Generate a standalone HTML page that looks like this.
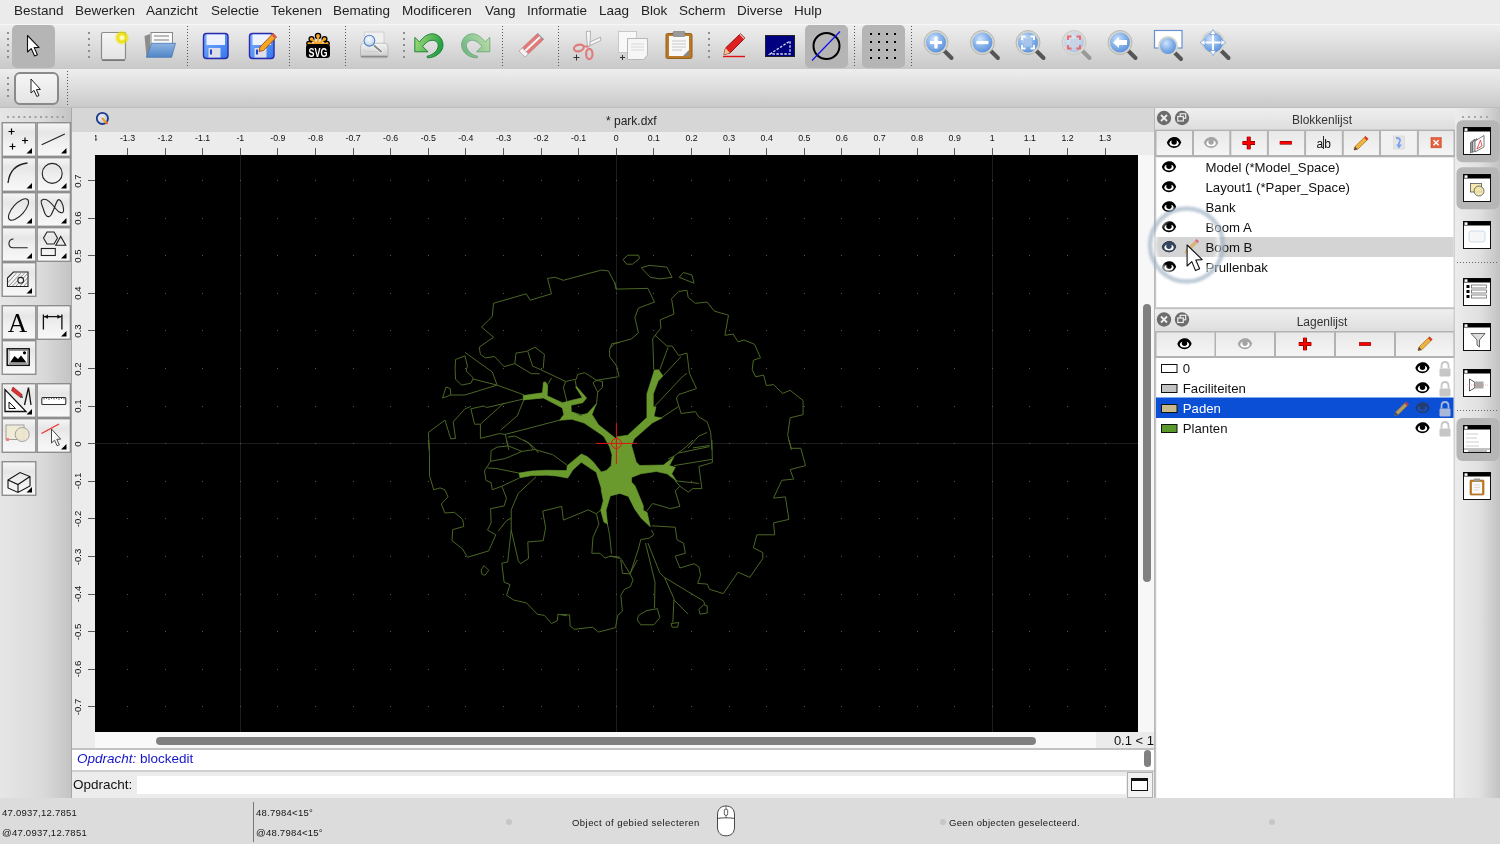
<!DOCTYPE html>
<html><head><meta charset="utf-8">
<style>
*{box-sizing:border-box}
html,body{margin:0;padding:0}
body{width:1500px;height:844px;position:relative;overflow:hidden;background:#e4e4e4;font-family:"Liberation Sans",sans-serif;color:#1e1e1e}
.a{position:absolute}
.menu span{position:absolute;top:3px;font-size:13.5px;color:#222}
.tb{background:linear-gradient(#eeeeee,#e2e2e2 35%,#c9c9c9)}
.sep{position:absolute;width:0;border-left:1.5px dotted #6a6a6a}
.chk{position:absolute;background:#b4b4b4;border-radius:6px}
.tbtn{position:absolute;border:1.5px solid #8c8c8c;background:linear-gradient(#fbfbfb,#ececec 50%,#e2e2e2);}
.tri{position:absolute;right:2px;bottom:2px;width:0;height:0;border-left:7px solid transparent;border-bottom:7px solid #000}
.rl{position:absolute;font-size:9.5px;color:#222}
.blist div{position:absolute;left:0;width:298px;height:20px;font-size:13.4px;line-height:20px}
.pbtn{position:absolute;top:0;height:26px;border-right:2px solid #c6c6c6;background:linear-gradient(#f7f7f7,#e9e9e9)}
.st{position:absolute;font-size:9.5px;color:#151515;letter-spacing:0.25px}
#wrap{position:absolute;left:0;top:0;width:1500px;height:844px;will-change:transform}
</style></head><body><div id="wrap">

<!-- menu bar -->
<div class="a menu" style="left:0;top:0;width:1500px;height:24px;background:#ebebeb">
<span style="left:14px">Bestand</span>
<span style="left:75px">Bewerken</span>
<span style="left:146px">Aanzicht</span>
<span style="left:211px">Selectie</span>
<span style="left:271px">Tekenen</span>
<span style="left:333px">Bemating</span>
<span style="left:402px">Modificeren</span>
<span style="left:485px">Vang</span>
<span style="left:527px">Informatie</span>
<span style="left:599px">Laag</span>
<span style="left:641px">Blok</span>
<span style="left:679px">Scherm</span>
<span style="left:737px">Diverse</span>
<span style="left:794px">Hulp</span>
</div>

<!-- main toolbar -->
<div class="a tb" style="left:0;top:24px;width:1500px;height:44px;border-top:1px solid #f6f6f6"></div>
<div class="a tb" style="left:0;top:68px;width:1500px;height:40px;border-top:1px solid #c8c8c8;border-bottom:1px solid #bdbdbd"></div>

<svg class="a" style="left:0;top:24px" width="1500" height="84" viewBox="0 24 1500 84">
<defs>
<linearGradient id="gpage" x1="0" y1="0" x2="0" y2="1"><stop offset="0" stop-color="#f6f6f6"/><stop offset="1" stop-color="#e4e4e4"/></linearGradient>
<radialGradient id="gglow"><stop offset="0" stop-color="#ffffff"/><stop offset="0.25" stop-color="#fbf7a0"/><stop offset="0.5" stop-color="#eee000"/><stop offset="0.75" stop-color="#eee000" stop-opacity="0.6"/><stop offset="1" stop-color="#eee000" stop-opacity="0"/></radialGradient>
<linearGradient id="gfold" x1="0" y1="0" x2="0" y2="1"><stop offset="0" stop-color="#8fb4e2"/><stop offset="1" stop-color="#4f86c8"/></linearGradient>
<linearGradient id="gflop" x1="0" y1="0" x2="1" y2="1"><stop offset="0" stop-color="#7fb0ff"/><stop offset="1" stop-color="#3377ee"/></linearGradient>
<radialGradient id="gmag" cx="0.4" cy="0.35" r="0.7"><stop offset="0" stop-color="#cfe3fb"/><stop offset="0.5" stop-color="#86b2ea"/><stop offset="1" stop-color="#4f87d6"/></radialGradient>
<radialGradient id="gmagd" cx="0.4" cy="0.35" r="0.7"><stop offset="0" stop-color="#e4ecf6"/><stop offset="1" stop-color="#a9bfdc"/></radialGradient>
<linearGradient id="gprn" x1="0" y1="0" x2="0" y2="1"><stop offset="0" stop-color="#f4f4f4"/><stop offset="1" stop-color="#c8c8c8"/></linearGradient>
<radialGradient id="gmagl" cx="0.45" cy="0.35" r="0.7"><stop offset="0" stop-color="#f4f8fd"/><stop offset="0.6" stop-color="#d6e2f2"/><stop offset="1" stop-color="#a8bcd8"/></radialGradient>
</defs>
<!-- handles -->
<g fill="#8e8e8e">
<rect x="7" y="32" width="2" height="2"/><rect x="7" y="38" width="2" height="2"/><rect x="7" y="44" width="2" height="2"/><rect x="7" y="50" width="2" height="2"/><rect x="7" y="56" width="2" height="2"/>
<rect x="88" y="32" width="2" height="2"/><rect x="88" y="38" width="2" height="2"/><rect x="88" y="44" width="2" height="2"/><rect x="88" y="50" width="2" height="2"/><rect x="88" y="56" width="2" height="2"/>
<rect x="403" y="32" width="2" height="2"/><rect x="403" y="38" width="2" height="2"/><rect x="403" y="44" width="2" height="2"/><rect x="403" y="50" width="2" height="2"/><rect x="403" y="56" width="2" height="2"/>
<rect x="708" y="32" width="2" height="2"/><rect x="708" y="38" width="2" height="2"/><rect x="708" y="44" width="2" height="2"/><rect x="708" y="50" width="2" height="2"/><rect x="708" y="56" width="2" height="2"/>
<rect x="7" y="77" width="2" height="2"/><rect x="7" y="83" width="2" height="2"/><rect x="7" y="89" width="2" height="2"/><rect x="7" y="95" width="2" height="2"/>
</g>
<!-- separators -->
<g stroke="#555" stroke-width="1" stroke-dasharray="1 2">
<line x1="187.5" y1="26" x2="187.5" y2="66"/>
<line x1="289.5" y1="26" x2="289.5" y2="66"/>
<line x1="345.5" y1="26" x2="345.5" y2="66"/>
<line x1="502.5" y1="26" x2="502.5" y2="66"/>
<line x1="558.5" y1="26" x2="558.5" y2="66"/>
<line x1="854.5" y1="26" x2="854.5" y2="66"/>
<line x1="911.5" y1="26" x2="911.5" y2="66"/>
<line x1="67.5" y1="71" x2="67.5" y2="105"/>
</g>
<!-- checked pointer -->
<rect x="12" y="25" width="43" height="43" rx="5" fill="#b5b5b5"/>
<path d="M27.5 35.5 L27.5 52 L31.2 48.6 L34.6 56 L37.4 54.8 L34.2 47.6 L39 47.4 Z" fill="#fff" stroke="#111" stroke-width="1.1" stroke-linejoin="round"/>
<!-- second toolbar pointer button -->
<rect x="15" y="73" width="43" height="31" rx="5" fill="url(#gpage)" stroke="#8a8a8a" stroke-width="2"/>
<path d="M31 79 L31 93 L34 90.4 L36.8 96.5 L39 95.5 L36.4 89.6 L40.4 89.4 Z" fill="#fff" stroke="#222" stroke-width="1" stroke-linejoin="round"/>
<!-- new -->
<rect x="101.5" y="32.5" width="24" height="27" rx="1.5" fill="url(#gpage)" stroke="#8c8c8c" stroke-width="1.2"/>
<line x1="102" y1="60.5" x2="125" y2="60.5" stroke="#777" stroke-width="1"/>
<circle cx="121.9" cy="37.7" r="7.5" fill="url(#gglow)"/>
<!-- open -->
<path d="M144.5 36 L150 34 L150 55 L146.5 57 Z" fill="#8c8c8c"/>
<rect x="151" y="32.5" width="21.5" height="16" fill="#fafafa" stroke="#888" stroke-width="1"/>
<rect x="154" y="35" width="15" height="2" fill="#bbb"/><rect x="154" y="39" width="15" height="2" fill="#bbb"/>
<path d="M151.5 43.3 L175.5 43.3 L171.6 57.3 L146.4 57.3 Z" fill="url(#gfold)" stroke="#4a78b0" stroke-width="0.8"/>
<!-- save -->
<rect x="203.5" y="33.5" width="24.5" height="25" rx="3" fill="url(#gflop)" stroke="#2a2aa8" stroke-width="1.4"/>
<rect x="206.5" y="34.5" width="18.5" height="10.5" fill="#eef2ff"/>
<rect x="208.5" y="48" width="12" height="9.5" fill="#dedee8"/>
<rect x="210" y="49.5" width="2" height="5" fill="#2244cc"/>
<!-- save as -->
<rect x="249.5" y="33.5" width="24.5" height="25" rx="3" fill="url(#gflop)" stroke="#2a2aa8" stroke-width="1.4"/>
<rect x="252.5" y="34.5" width="18.5" height="10.5" fill="#eef2ff"/>
<rect x="254.5" y="48" width="12" height="9.5" fill="#dedee8"/>
<rect x="256" y="49.5" width="2" height="5" fill="#2244cc"/>
<path d="M259 51.5 L260 47 L273 33.5 L276.5 37 L263.5 50.5 Z" fill="#f5a623" stroke="#a14a10" stroke-width="0.9"/>
<path d="M273 33.5 L276.5 37 L275 38.5 L271.5 35 Z" fill="#e05050"/>
<!-- svg -->
<g fill="#f6a623" stroke="#000" stroke-width="1.3">
<circle cx="318" cy="36" r="2.6"/><circle cx="311.5" cy="39" r="2.4"/><circle cx="324.5" cy="39" r="2.4"/><circle cx="309" cy="43.5" r="2.2"/><circle cx="327" cy="43.5" r="2.2"/>
</g>
<path d="M318 45 L311.5 39 M318 45 L318 36 M318 45 L324.5 39 M318 45 L309 43.5 M318 45 L327 43.5" stroke="#f6a623" stroke-width="2.2"/>
<rect x="306" y="44" width="24" height="14" rx="3.5" fill="#000"/>
<text x="318" y="56.6" font-family="Liberation Sans" font-weight="bold" font-size="13" fill="#fff" text-anchor="middle" textLength="19" lengthAdjust="spacingAndGlyphs">SVG</text>
<!-- print preview -->
<rect x="364.5" y="32" width="19.5" height="14" rx="1" fill="#f0f0f0" stroke="#c8c8c8" stroke-width="0.8"/>
<path d="M360.5 47 Q360.5 43.2 364 43.2 L384.5 43.2 Q388 43.2 388 47 L388 55.5 Q388 57.8 385.5 57.8 L363 57.8 Q360.5 57.8 360.5 55.5 Z" fill="url(#gprn)" stroke="#b0b0b0" stroke-width="0.8"/>
<path d="M361 56.5 L387.5 56.5" stroke="#8a8a8a" stroke-width="1.6"/>
<path d="M363 49 Q363 51.5 366 51.5 L383 51.5" fill="none" stroke="#c8c8c8" stroke-width="0.8"/>
<line x1="373.5" y1="45" x2="381" y2="51.5" stroke="#fff" stroke-width="3.6" stroke-linecap="round"/>
<line x1="373.5" y1="45" x2="381" y2="51.5" stroke="#8a8a8a" stroke-width="2.2" stroke-linecap="round"/>
<circle cx="369.4" cy="40.7" r="6.6" fill="#f6f6f6"/>
<circle cx="369.4" cy="40.7" r="5.4" fill="url(#gmagl)" stroke="#4a7fc6" stroke-width="1.1"/>
<!-- undo -->
<linearGradient id="gundo" x1="0" y1="0" x2="1" y2="0.3"><stop offset="0" stop-color="#a8de7a"/><stop offset="1" stop-color="#25a045"/></linearGradient>
<path id="undo" d="M414.8 37.4 L419.5 42 C423 37 428 33.8 432 33.8 C438.5 33.8 443 39 443 45 C443 52 436 57.8 427.5 57.8 L427 56.3 C433 55 438.2 50.5 438.2 45.5 C438.2 42.5 435.5 40.3 432 40.3 C429 40.3 426 42.5 422.6 46.4 L428 51.8 L414.8 51.8 Z" fill="url(#gundo)" stroke="#137a2c" stroke-width="0.9" stroke-linejoin="round"/>
<g transform="translate(904.6,0) scale(-1,1)" opacity="0.55"><path d="M414.8 37.4 L419.5 42 C423 37 428 33.8 432 33.8 C438.5 33.8 443 39 443 45 C443 52 436 57.8 427.5 57.8 L427 56.3 C433 55 438.2 50.5 438.2 45.5 C438.2 42.5 435.5 40.3 432 40.3 C429 40.3 426 42.5 422.6 46.4 L428 51.8 L414.8 51.8 Z" fill="url(#gundo)" stroke="#137a2c" stroke-width="0.9" stroke-linejoin="round"/></g>
<!-- eraser -->
<ellipse cx="532" cy="57.3" rx="12" ry="1.8" fill="#d2d2d2" opacity="0.8"/>
<path d="M519 51 L537.5 33.5 L543.5 39.5 L525 57 Z" fill="#e27a7a" stroke="#c86464" stroke-width="0.6"/>
<path d="M521.3 53.3 L539.8 35.8 L541.2 37.2 L522.7 54.7 Z" fill="#f4f4f4"/>
<path d="M519 51 L522.3 47.9 L528.3 53.9 L525 57 Z" fill="#f2f2f2" stroke="#a8a8a8" stroke-width="0.6"/>
<path d="M537.5 33.5 L543.5 39.5" stroke="#999" stroke-width="1.2"/>
<!-- scissors -->
<path d="M586.2 31.5 L590.5 31 L590 46 L587.5 47 Z" fill="#f6f6f6" stroke="#9a9a9a" stroke-width="0.7"/>
<path d="M590 42 L600.5 37.2 L600.8 40.5 L590 45.5 Z" fill="#f6f6f6" stroke="#9a9a9a" stroke-width="0.7"/>
<ellipse cx="578.8" cy="48" rx="5" ry="3.2" transform="rotate(-15 578.8 48)" fill="none" stroke="#e07c7c" stroke-width="2.2"/>
<ellipse cx="589.3" cy="54" rx="3.2" ry="5.2" fill="none" stroke="#e07c7c" stroke-width="2.2"/>
<path d="M583.5 46.5 L588.5 46.5" stroke="#e07c7c" stroke-width="2"/>
<path d="M573.5 57.5 L579.5 57.5 M576.5 54.5 L576.5 60.5" stroke="#333" stroke-width="1"/>
<!-- copy -->
<rect x="618.5" y="31.5" width="18" height="21" fill="#f8f8f8" stroke="#c8c8c8" stroke-width="1"/>
<path d="M627.5 38.5 L647.5 38.5 L647.5 55 L643.5 59.5 L627.5 59.5 Z" fill="#f6f6f6" stroke="#b8b8b8" stroke-width="1"/>
<g stroke="#d8d8d8" stroke-width="1"><line x1="631" y1="44" x2="644" y2="44"/><line x1="631" y1="47" x2="644" y2="47"/><line x1="631" y1="50" x2="644" y2="50"/></g>
<path d="M620 57.5 L625 57.5 M622.5 55 L622.5 60" stroke="#333" stroke-width="1"/>
<!-- paste -->
<rect x="666" y="33.5" width="26" height="25" rx="1.5" fill="#b87a28" stroke="#94601a" stroke-width="1"/>
<rect x="669" y="36" width="20" height="20" fill="#f8f8f8"/>
<rect x="673" y="31.5" width="12" height="5" rx="1" fill="#9a9a9a" stroke="#777" stroke-width="0.6"/>
<g stroke="#c8c8c8" stroke-width="1"><line x1="672" y1="41" x2="686" y2="41"/><line x1="672" y1="44" x2="686" y2="44"/><line x1="672" y1="47" x2="686" y2="47"/><line x1="672" y1="50" x2="682" y2="50"/></g>
<path d="M683 56 L689 50 L689 56 Z" fill="#888"/>
<!-- pencil line -->
<line x1="723" y1="56.5" x2="745" y2="56.5" stroke="#e01010" stroke-width="1.4"/>
<path d="M724 54.5 L725.5 48 L739 35 L743.5 39.5 L730 53 Z" fill="#e02020" stroke="#8a0c0c" stroke-width="0.9"/>
<path d="M724 54.5 L725.5 48 L730 53 Z" fill="#e8c890"/>
<path d="M739 35 L743.5 39.5 L745 38 L740.5 33.5 Z" fill="#f0a0a0" stroke="#8a0c0c" stroke-width="0.6"/>
<!-- blue rect -->
<rect x="765.5" y="35.5" width="29" height="21" fill="#000080" stroke="#222" stroke-width="1"/>
<path d="M770 54 L790 41 L790 54 Z" fill="none" stroke="#dde" stroke-width="1.3" stroke-dasharray="2.5 1.5"/>
<!-- checked circle -->
<rect x="805" y="25" width="43" height="43" rx="5" fill="#b5b5b5"/>
<circle cx="826.5" cy="46" r="13" fill="none" stroke="#000" stroke-width="2"/>
<line x1="812" y1="60.5" x2="840" y2="31.5" stroke="#1010ee" stroke-width="1.2"/>
<!-- grid -->
<rect x="862" y="25" width="43" height="43" rx="5" fill="#b5b5b5"/>
<g fill="#000">
<rect x="870" y="33" width="2" height="2"/><rect x="878" y="33" width="2" height="2"/><rect x="886" y="33" width="2" height="2"/><rect x="894" y="33" width="2" height="2"/>
<rect x="870" y="41" width="2" height="2"/><rect x="878" y="41" width="2" height="2"/><rect x="886" y="41" width="2" height="2"/><rect x="894" y="41" width="2" height="2"/>
<rect x="870" y="49" width="2" height="2"/><rect x="878" y="49" width="2" height="2"/><rect x="886" y="49" width="2" height="2"/><rect x="894" y="49" width="2" height="2"/>
<rect x="870" y="57" width="2" height="2"/><rect x="878" y="57" width="2" height="2"/><rect x="886" y="57" width="2" height="2"/><rect x="894" y="57" width="2" height="2"/>
</g>
<!-- zoom icons -->
<g id="zm">
<g transform="translate(936,42.5)"><line x1="8" y1="8" x2="15.5" y2="15.5" stroke="#555" stroke-width="4" stroke-linecap="round"/><circle r="11" fill="url(#gmag)" stroke="#d6d6d0" stroke-width="2"/><circle r="12" fill="none" stroke="#a8a8a0" stroke-width="0.7"/><path d="M-6 0 H6 M0 -6 V6" stroke="#fff" stroke-width="3.2"/></g>
<g transform="translate(982.4,42.5)"><line x1="8" y1="8" x2="15.5" y2="15.5" stroke="#555" stroke-width="4" stroke-linecap="round"/><circle r="11" fill="url(#gmag)" stroke="#d6d6d0" stroke-width="2"/><circle r="12" fill="none" stroke="#a8a8a0" stroke-width="0.7"/><path d="M-6 0 H6" stroke="#fff" stroke-width="3.2"/></g>
<g transform="translate(1028,42.5)"><line x1="8" y1="8" x2="15.5" y2="15.5" stroke="#555" stroke-width="4" stroke-linecap="round"/><circle r="11" fill="url(#gmag)" stroke="#d6d6d0" stroke-width="2"/><circle r="12" fill="none" stroke="#a8a8a0" stroke-width="0.7"/><rect x="-4" y="-4" width="8" height="8" fill="#a8c4ea"/><path d="M-6 -2.5 V-6 H-2.5 M2.5 -6 H6 V-2.5 M6 2.5 V6 H2.5 M-2.5 6 H-6 V2.5" fill="none" stroke="#fff" stroke-width="1.8"/></g>
<g transform="translate(1074,42.5)"><line x1="8" y1="8" x2="15.5" y2="15.5" stroke="#999" stroke-width="4" stroke-linecap="round"/><circle r="11" fill="url(#gmagd)" stroke="#dcdcd8" stroke-width="2"/><circle r="12" fill="none" stroke="#c0c0b8" stroke-width="0.7"/><rect x="-4" y="-4" width="8" height="8" fill="#c8d4e4"/><path d="M-6 -2.5 V-6 H-2.5 M2.5 -6 H6 V-2.5 M6 2.5 V6 H2.5 M-2.5 6 H-6 V2.5" fill="none" stroke="#ee6666" stroke-width="1.8"/></g>
<g transform="translate(1120,42.5)"><line x1="8" y1="8" x2="15.5" y2="15.5" stroke="#555" stroke-width="4" stroke-linecap="round"/><circle r="11" fill="url(#gmag)" stroke="#d6d6d0" stroke-width="2"/><circle r="12" fill="none" stroke="#a8a8a0" stroke-width="0.7"/><path d="M-7 0 L-1 -5.5 L-1 -2.5 L7 -2.5 L7 2.5 L-1 2.5 L-1 5.5 Z" fill="#fff"/></g>
<g transform="translate(1168,46)"><rect x="-13.5" y="-15.5" width="27.5" height="17.5" fill="#fff" stroke="#6a90d0" stroke-width="1.2"/><line x1="7" y1="7" x2="13" y2="13" stroke="#555" stroke-width="4" stroke-linecap="round"/><circle r="9" fill="url(#gmag)" stroke="#d6d6d0" stroke-width="2"/></g>
<g transform="translate(1213,42.5)"><line x1="8" y1="8" x2="15.5" y2="15.5" stroke="#555" stroke-width="4" stroke-linecap="round"/><circle r="11" fill="url(#gmag)" stroke="#d6d6d0" stroke-width="2"/><path d="M0 -12 V12 M-12 0 H12" stroke="#fff" stroke-width="2"/><path d="M0 -13 L-3 -8 H3 Z M0 13 L-3 8 H3 Z M-13 0 L-8 -3 V3 Z M13 0 L8 -3 V3 Z" fill="#fff" stroke="#5a86d0" stroke-width="0.6"/></g>
</g>
</svg>


<!-- left toolbox -->
<div class="a" style="left:0;top:108px;width:72px;height:690px;background:linear-gradient(90deg,#e6e6e6,#dadada 60%,#c4c4c4);border-right:1px solid #a8a8a8"></div>
<svg class="a" style="left:0;top:108px" width="72" height="400" viewBox="0 108 72 400">
<defs>
<linearGradient id="gbtn" x1="0" y1="0" x2="0" y2="1"><stop offset="0" stop-color="#f6f6f6"/><stop offset="0.3" stop-color="#e6e6e6"/><stop offset="0.55" stop-color="#efefef"/><stop offset="1" stop-color="#f8f8f8"/></linearGradient>
<symbol id="tri" overflow="visible"><path d="M0 5.5 L5.5 0 L5.5 5.5 Z" fill="#000"/></symbol>
</defs>
<!-- handle dots -->
<g fill="#a0a0a0">
<rect x="7" y="116" width="2" height="2"/><rect x="12.5" y="116" width="2" height="2"/><rect x="18" y="116" width="2" height="2"/><rect x="23.5" y="116" width="2" height="2"/><rect x="29" y="116" width="2" height="2"/><rect x="34.5" y="116" width="2" height="2"/><rect x="40" y="116" width="2" height="2"/><rect x="45.5" y="116" width="2" height="2"/><rect x="51" y="116" width="2" height="2"/><rect x="56.5" y="116" width="2" height="2"/><rect x="62" y="116" width="2" height="2"/>
</g>
<g fill="url(#gbtn)" stroke="#8e8e8e" stroke-width="1.4">
<rect x="2.2" y="122.7" width="33.6" height="33.6"/><rect x="37.2" y="122.7" width="33.2" height="33.6"/>
<rect x="2.2" y="157.7" width="33.6" height="33.6"/><rect x="37.2" y="157.7" width="33.2" height="33.6"/>
<rect x="2.2" y="192.7" width="33.6" height="33.6"/><rect x="37.2" y="192.7" width="33.2" height="33.6"/>
<rect x="2.2" y="227.7" width="33.6" height="33.6"/><rect x="37.2" y="227.7" width="33.2" height="33.6"/>
<rect x="2.2" y="262.7" width="33.6" height="33.6"/>
<rect x="2.2" y="305.7" width="33.6" height="33.6"/><rect x="37.2" y="305.7" width="33.2" height="33.6"/>
<rect x="2.2" y="340.7" width="33.6" height="33.6"/>
<rect x="2.2" y="383.7" width="33.6" height="33.6"/><rect x="37.2" y="383.7" width="33.2" height="33.6"/>
<rect x="2.2" y="418.7" width="33.6" height="33.6"/><rect x="37.2" y="418.7" width="33.2" height="33.6"/>
<rect x="2.2" y="461.7" width="33.6" height="33.6"/>
</g>
<g>
<use href="#tri" x="26.5" y="148"/><use href="#tri" x="61" y="148"/>
<use href="#tri" x="26.5" y="183"/><use href="#tri" x="61" y="183"/>
<use href="#tri" x="26.5" y="218"/><use href="#tri" x="61" y="218"/>
<use href="#tri" x="26.5" y="253"/><use href="#tri" x="61" y="253"/>
<use href="#tri" x="26.5" y="288"/>
<use href="#tri" x="61" y="331"/>
<use href="#tri" x="26.5" y="409"/>
<use href="#tri" x="61" y="444"/>
<use href="#tri" x="26.5" y="487"/>
</g>
<g fill="none" stroke="#222" stroke-width="1.1">
<!-- points -->
<path d="M8.5 131.5 h6 M11.5 128.5 v6 M22 140.5 h6 M25 137.5 v6 M9.5 146.5 h6 M12.5 143.5 v6" stroke="#000" stroke-width="1.2"/>
<!-- line -->
<path d="M41.7 144.7 L64.8 133.9"/>
<!-- arc -->
<path d="M8 183 Q10 165 27.5 163" stroke-width="1.3"/>
<!-- circle -->
<circle cx="52.2" cy="173.4" r="10"/>
<!-- ellipse -->
<ellipse cx="18.5" cy="209.5" rx="13.5" ry="5.8" transform="rotate(-48 18.5 209.5)"/>
<!-- spline -->
<path d="M41.5 200.5 C46 196 53 205 56 209 C59 213 63 214 63.5 211 C64 205 60 198 58 200 C56 202 54 210 51 215 C48 219 45 215 44 211 C43 207 40 202 41.5 200.5 Z"/>
<!-- polyline hook -->
<path d="M13.5 239 C8 239 7 247.5 13 247.8 L27.7 247.8"/>
<!-- shapes -->
<path d="M43.5 238 L47 232 L54 232 L57.5 238 L54 244 L47 244 Z"/>
<path d="M55.7 245.2 L60.7 236.4 L65.7 245.2 Z"/>
<rect x="41.3" y="248.5" width="14" height="7"/>
<!-- hatch -->
<path d="M7.5 278 L13.5 272 L28 272 L28 286.5 L7.5 286.5 Z" fill="#f4f4f4"/>
<path d="M9 286 L21 273 M12.5 286 L25 272.5 M16 286 L28 273 M20 286 L28 277.5 M24 286 L28 281.5 M8 282.5 L16.5 273" stroke="#666" stroke-width="0.7"/>
<circle cx="20.7" cy="280.3" r="2.9" fill="#f4f4f4"/>
<!-- dimension -->
<path d="M43.4 314.6 V329.5 M61.9 314.6 V329.5 M44 316.7 H61.3" stroke="#111" stroke-width="1.3"/>
<path d="M44 316.7 L48 314.6 L48 318.8 Z M61.3 316.7 L57.3 314.6 L57.3 318.8 Z" fill="#111" stroke="none"/>
<!-- ruler -->
<rect x="41.8" y="397.5" width="24" height="7" rx="1" fill="#fff" stroke="#333"/>
<path d="M44 397.5 v2 M46.5 397.5 v1.5 M49 397.5 v2.5 M51.5 397.5 v1.5 M54 397.5 v2 M56.5 397.5 v1.5 M59 397.5 v2.5 M61.5 397.5 v1.5 M64 397.5 v2" stroke-width="0.7"/>
<!-- 3d cube -->
<path d="M8 480 L20 472.5 L30 476.5 L30 486 L18 492.5 L8 488 Z M8 480 L18 484.5 L30 476.5 M18 484.5 L18 492.5" stroke="#111" stroke-width="1.1"/>
</g>
<!-- text A -->
<text x="17.5" y="331.5" font-family="Liberation Serif" font-size="27" text-anchor="middle" fill="#000">A</text>
<!-- image -->
<rect x="7.2" y="348.8" width="22" height="16.5" fill="#fff" stroke="#111" stroke-width="1.5"/>
<rect x="9" y="350.5" width="18.5" height="13" fill="#fff" stroke="#333" stroke-width="0.5"/>
<path d="M10 362.5 L14.5 356 L18 359 L21 355.5 L26.5 362.5 Z" fill="#000"/>
<circle cx="24.5" cy="352.8" r="1.6" fill="#000"/>
<!-- draw tools -->
<path d="M5 389.5 L5 411.5 L26 411.5 Z" fill="#fff" stroke="#111" stroke-width="1.3"/>
<path d="M9 402 L9 408.5 L15.5 408.5 Z" fill="#f4f4f4" stroke="#111" stroke-width="1"/>
<path d="M11.5 390.5 L13 387 L22 394.5 L20.5 397.5 Z" fill="#e03030" stroke="#801010" stroke-width="0.6"/>
<path d="M20.5 397.5 L22 394.5 L23 398 Z" fill="#333"/>
<path d="M28.5 387.5 L24.5 405 M28.5 387.5 L31 405" stroke="#111" stroke-width="1.3" fill="none"/>
<!-- select block -->
<rect x="6" y="425" width="18" height="14.5" fill="#f0ebd5" stroke="#a0a0a0" stroke-width="1"/>
<circle cx="22.2" cy="434.5" r="7" fill="#ede7cf" fill-opacity="0.9" stroke="#a0a0a0" stroke-width="1"/>
<rect x="6" y="438" width="3" height="3" fill="#f08080"/>
<!-- select line -->
<line x1="41.5" y1="433.5" x2="59" y2="424" stroke="#f03030" stroke-width="1.3"/>
<path d="M51.5 429 L51.5 443 L54.6 440.2 L57.2 445.8 L59.3 444.8 L56.8 439.3 L60.6 439.1 Z" fill="#fff" stroke="#333" stroke-width="0.9" stroke-linejoin="round"/>
</svg>


<!-- MDI window -->
<div class="a" style="left:72px;top:108px;width:1083px;height:24px;background:#d6d6d6"></div>
<div class="a" style="left:606px;top:113.6px;font-size:12px;color:#222">* park.dxf</div>
<div class="a" style="left:72px;top:132px;width:1082px;height:23px;background:#ececec"></div>
<div class="a" style="left:72px;top:155px;width:23px;height:593px;background:#ececec"></div>
<div class="a" style="left:95px;top:155px;width:1043px;height:577px;background:#000;overflow:hidden">
<svg width="1043" height="577" viewBox="95 155 1043 577" style="position:absolute;left:0;top:0" id="cv"><line x1="240.5" y1="155" x2="240.5" y2="732" stroke="#1c1c1c" stroke-width="1"/>
<line x1="616.5" y1="155" x2="616.5" y2="732" stroke="#1c1c1c" stroke-width="1"/>
<line x1="992.5" y1="155" x2="992.5" y2="732" stroke="#1c1c1c" stroke-width="1"/>
<line x1="95" y1="443.5" x2="1138" y2="443.5" stroke="#1c1c1c" stroke-width="1"/>
<rect x="89" y="706" width="1" height="1" fill="#555"/>
<rect x="89" y="669" width="1" height="1" fill="#555"/>
<rect x="89" y="631" width="1" height="1" fill="#555"/>
<rect x="89" y="594" width="1" height="1" fill="#555"/>
<rect x="89" y="556" width="1" height="1" fill="#555"/>
<rect x="89" y="518" width="1" height="1" fill="#555"/>
<rect x="89" y="481" width="1" height="1" fill="#555"/>
<rect x="89" y="443" width="1" height="1" fill="#555"/>
<rect x="89" y="406" width="1" height="1" fill="#555"/>
<rect x="89" y="368" width="1" height="1" fill="#555"/>
<rect x="89" y="330" width="1" height="1" fill="#555"/>
<rect x="89" y="293" width="1" height="1" fill="#555"/>
<rect x="89" y="255" width="1" height="1" fill="#555"/>
<rect x="89" y="218" width="1" height="1" fill="#555"/>
<rect x="89" y="180" width="1" height="1" fill="#555"/>
<rect x="127" y="706" width="1" height="1" fill="#555"/>
<rect x="127" y="669" width="1" height="1" fill="#555"/>
<rect x="127" y="631" width="1" height="1" fill="#555"/>
<rect x="127" y="594" width="1" height="1" fill="#555"/>
<rect x="127" y="556" width="1" height="1" fill="#555"/>
<rect x="127" y="518" width="1" height="1" fill="#555"/>
<rect x="127" y="481" width="1" height="1" fill="#555"/>
<rect x="127" y="443" width="1" height="1" fill="#555"/>
<rect x="127" y="406" width="1" height="1" fill="#555"/>
<rect x="127" y="368" width="1" height="1" fill="#555"/>
<rect x="127" y="330" width="1" height="1" fill="#555"/>
<rect x="127" y="293" width="1" height="1" fill="#555"/>
<rect x="127" y="255" width="1" height="1" fill="#555"/>
<rect x="127" y="218" width="1" height="1" fill="#555"/>
<rect x="127" y="180" width="1" height="1" fill="#555"/>
<rect x="165" y="706" width="1" height="1" fill="#555"/>
<rect x="165" y="669" width="1" height="1" fill="#555"/>
<rect x="165" y="631" width="1" height="1" fill="#555"/>
<rect x="165" y="594" width="1" height="1" fill="#555"/>
<rect x="165" y="556" width="1" height="1" fill="#555"/>
<rect x="165" y="518" width="1" height="1" fill="#555"/>
<rect x="165" y="481" width="1" height="1" fill="#555"/>
<rect x="165" y="443" width="1" height="1" fill="#555"/>
<rect x="165" y="406" width="1" height="1" fill="#555"/>
<rect x="165" y="368" width="1" height="1" fill="#555"/>
<rect x="165" y="330" width="1" height="1" fill="#555"/>
<rect x="165" y="293" width="1" height="1" fill="#555"/>
<rect x="165" y="255" width="1" height="1" fill="#555"/>
<rect x="165" y="218" width="1" height="1" fill="#555"/>
<rect x="165" y="180" width="1" height="1" fill="#555"/>
<rect x="202" y="706" width="1" height="1" fill="#555"/>
<rect x="202" y="669" width="1" height="1" fill="#555"/>
<rect x="202" y="631" width="1" height="1" fill="#555"/>
<rect x="202" y="594" width="1" height="1" fill="#555"/>
<rect x="202" y="556" width="1" height="1" fill="#555"/>
<rect x="202" y="518" width="1" height="1" fill="#555"/>
<rect x="202" y="481" width="1" height="1" fill="#555"/>
<rect x="202" y="443" width="1" height="1" fill="#555"/>
<rect x="202" y="406" width="1" height="1" fill="#555"/>
<rect x="202" y="368" width="1" height="1" fill="#555"/>
<rect x="202" y="330" width="1" height="1" fill="#555"/>
<rect x="202" y="293" width="1" height="1" fill="#555"/>
<rect x="202" y="255" width="1" height="1" fill="#555"/>
<rect x="202" y="218" width="1" height="1" fill="#555"/>
<rect x="202" y="180" width="1" height="1" fill="#555"/>
<rect x="240" y="706" width="1" height="1" fill="#555"/>
<rect x="240" y="669" width="1" height="1" fill="#555"/>
<rect x="240" y="631" width="1" height="1" fill="#555"/>
<rect x="240" y="594" width="1" height="1" fill="#555"/>
<rect x="240" y="556" width="1" height="1" fill="#555"/>
<rect x="240" y="518" width="1" height="1" fill="#555"/>
<rect x="240" y="481" width="1" height="1" fill="#555"/>
<rect x="240" y="443" width="1" height="1" fill="#555"/>
<rect x="240" y="406" width="1" height="1" fill="#555"/>
<rect x="240" y="368" width="1" height="1" fill="#555"/>
<rect x="240" y="330" width="1" height="1" fill="#555"/>
<rect x="240" y="293" width="1" height="1" fill="#555"/>
<rect x="240" y="255" width="1" height="1" fill="#555"/>
<rect x="240" y="218" width="1" height="1" fill="#555"/>
<rect x="240" y="180" width="1" height="1" fill="#555"/>
<rect x="277" y="706" width="1" height="1" fill="#555"/>
<rect x="277" y="669" width="1" height="1" fill="#555"/>
<rect x="277" y="631" width="1" height="1" fill="#555"/>
<rect x="277" y="594" width="1" height="1" fill="#555"/>
<rect x="277" y="556" width="1" height="1" fill="#555"/>
<rect x="277" y="518" width="1" height="1" fill="#555"/>
<rect x="277" y="481" width="1" height="1" fill="#555"/>
<rect x="277" y="443" width="1" height="1" fill="#555"/>
<rect x="277" y="406" width="1" height="1" fill="#555"/>
<rect x="277" y="368" width="1" height="1" fill="#555"/>
<rect x="277" y="330" width="1" height="1" fill="#555"/>
<rect x="277" y="293" width="1" height="1" fill="#555"/>
<rect x="277" y="255" width="1" height="1" fill="#555"/>
<rect x="277" y="218" width="1" height="1" fill="#555"/>
<rect x="277" y="180" width="1" height="1" fill="#555"/>
<rect x="315" y="706" width="1" height="1" fill="#555"/>
<rect x="315" y="669" width="1" height="1" fill="#555"/>
<rect x="315" y="631" width="1" height="1" fill="#555"/>
<rect x="315" y="594" width="1" height="1" fill="#555"/>
<rect x="315" y="556" width="1" height="1" fill="#555"/>
<rect x="315" y="518" width="1" height="1" fill="#555"/>
<rect x="315" y="481" width="1" height="1" fill="#555"/>
<rect x="315" y="443" width="1" height="1" fill="#555"/>
<rect x="315" y="406" width="1" height="1" fill="#555"/>
<rect x="315" y="368" width="1" height="1" fill="#555"/>
<rect x="315" y="330" width="1" height="1" fill="#555"/>
<rect x="315" y="293" width="1" height="1" fill="#555"/>
<rect x="315" y="255" width="1" height="1" fill="#555"/>
<rect x="315" y="218" width="1" height="1" fill="#555"/>
<rect x="315" y="180" width="1" height="1" fill="#555"/>
<rect x="353" y="706" width="1" height="1" fill="#555"/>
<rect x="353" y="669" width="1" height="1" fill="#555"/>
<rect x="353" y="631" width="1" height="1" fill="#555"/>
<rect x="353" y="594" width="1" height="1" fill="#555"/>
<rect x="353" y="556" width="1" height="1" fill="#555"/>
<rect x="353" y="518" width="1" height="1" fill="#555"/>
<rect x="353" y="481" width="1" height="1" fill="#555"/>
<rect x="353" y="443" width="1" height="1" fill="#555"/>
<rect x="353" y="406" width="1" height="1" fill="#555"/>
<rect x="353" y="368" width="1" height="1" fill="#555"/>
<rect x="353" y="330" width="1" height="1" fill="#555"/>
<rect x="353" y="293" width="1" height="1" fill="#555"/>
<rect x="353" y="255" width="1" height="1" fill="#555"/>
<rect x="353" y="218" width="1" height="1" fill="#555"/>
<rect x="353" y="180" width="1" height="1" fill="#555"/>
<rect x="390" y="706" width="1" height="1" fill="#555"/>
<rect x="390" y="669" width="1" height="1" fill="#555"/>
<rect x="390" y="631" width="1" height="1" fill="#555"/>
<rect x="390" y="594" width="1" height="1" fill="#555"/>
<rect x="390" y="556" width="1" height="1" fill="#555"/>
<rect x="390" y="518" width="1" height="1" fill="#555"/>
<rect x="390" y="481" width="1" height="1" fill="#555"/>
<rect x="390" y="443" width="1" height="1" fill="#555"/>
<rect x="390" y="406" width="1" height="1" fill="#555"/>
<rect x="390" y="368" width="1" height="1" fill="#555"/>
<rect x="390" y="330" width="1" height="1" fill="#555"/>
<rect x="390" y="293" width="1" height="1" fill="#555"/>
<rect x="390" y="255" width="1" height="1" fill="#555"/>
<rect x="390" y="218" width="1" height="1" fill="#555"/>
<rect x="390" y="180" width="1" height="1" fill="#555"/>
<rect x="428" y="706" width="1" height="1" fill="#555"/>
<rect x="428" y="669" width="1" height="1" fill="#555"/>
<rect x="428" y="631" width="1" height="1" fill="#555"/>
<rect x="428" y="594" width="1" height="1" fill="#555"/>
<rect x="428" y="556" width="1" height="1" fill="#555"/>
<rect x="428" y="518" width="1" height="1" fill="#555"/>
<rect x="428" y="481" width="1" height="1" fill="#555"/>
<rect x="428" y="443" width="1" height="1" fill="#555"/>
<rect x="428" y="406" width="1" height="1" fill="#555"/>
<rect x="428" y="368" width="1" height="1" fill="#555"/>
<rect x="428" y="330" width="1" height="1" fill="#555"/>
<rect x="428" y="293" width="1" height="1" fill="#555"/>
<rect x="428" y="255" width="1" height="1" fill="#555"/>
<rect x="428" y="218" width="1" height="1" fill="#555"/>
<rect x="428" y="180" width="1" height="1" fill="#555"/>
<rect x="465" y="706" width="1" height="1" fill="#555"/>
<rect x="465" y="669" width="1" height="1" fill="#555"/>
<rect x="465" y="631" width="1" height="1" fill="#555"/>
<rect x="465" y="594" width="1" height="1" fill="#555"/>
<rect x="465" y="556" width="1" height="1" fill="#555"/>
<rect x="465" y="518" width="1" height="1" fill="#555"/>
<rect x="465" y="481" width="1" height="1" fill="#555"/>
<rect x="465" y="443" width="1" height="1" fill="#555"/>
<rect x="465" y="406" width="1" height="1" fill="#555"/>
<rect x="465" y="368" width="1" height="1" fill="#555"/>
<rect x="465" y="330" width="1" height="1" fill="#555"/>
<rect x="465" y="293" width="1" height="1" fill="#555"/>
<rect x="465" y="255" width="1" height="1" fill="#555"/>
<rect x="465" y="218" width="1" height="1" fill="#555"/>
<rect x="465" y="180" width="1" height="1" fill="#555"/>
<rect x="503" y="706" width="1" height="1" fill="#555"/>
<rect x="503" y="669" width="1" height="1" fill="#555"/>
<rect x="503" y="631" width="1" height="1" fill="#555"/>
<rect x="503" y="594" width="1" height="1" fill="#555"/>
<rect x="503" y="556" width="1" height="1" fill="#555"/>
<rect x="503" y="518" width="1" height="1" fill="#555"/>
<rect x="503" y="481" width="1" height="1" fill="#555"/>
<rect x="503" y="443" width="1" height="1" fill="#555"/>
<rect x="503" y="406" width="1" height="1" fill="#555"/>
<rect x="503" y="368" width="1" height="1" fill="#555"/>
<rect x="503" y="330" width="1" height="1" fill="#555"/>
<rect x="503" y="293" width="1" height="1" fill="#555"/>
<rect x="503" y="255" width="1" height="1" fill="#555"/>
<rect x="503" y="218" width="1" height="1" fill="#555"/>
<rect x="503" y="180" width="1" height="1" fill="#555"/>
<rect x="541" y="706" width="1" height="1" fill="#555"/>
<rect x="541" y="669" width="1" height="1" fill="#555"/>
<rect x="541" y="631" width="1" height="1" fill="#555"/>
<rect x="541" y="594" width="1" height="1" fill="#555"/>
<rect x="541" y="556" width="1" height="1" fill="#555"/>
<rect x="541" y="518" width="1" height="1" fill="#555"/>
<rect x="541" y="481" width="1" height="1" fill="#555"/>
<rect x="541" y="443" width="1" height="1" fill="#555"/>
<rect x="541" y="406" width="1" height="1" fill="#555"/>
<rect x="541" y="368" width="1" height="1" fill="#555"/>
<rect x="541" y="330" width="1" height="1" fill="#555"/>
<rect x="541" y="293" width="1" height="1" fill="#555"/>
<rect x="541" y="255" width="1" height="1" fill="#555"/>
<rect x="541" y="218" width="1" height="1" fill="#555"/>
<rect x="541" y="180" width="1" height="1" fill="#555"/>
<rect x="578" y="706" width="1" height="1" fill="#555"/>
<rect x="578" y="669" width="1" height="1" fill="#555"/>
<rect x="578" y="631" width="1" height="1" fill="#555"/>
<rect x="578" y="594" width="1" height="1" fill="#555"/>
<rect x="578" y="556" width="1" height="1" fill="#555"/>
<rect x="578" y="518" width="1" height="1" fill="#555"/>
<rect x="578" y="481" width="1" height="1" fill="#555"/>
<rect x="578" y="443" width="1" height="1" fill="#555"/>
<rect x="578" y="406" width="1" height="1" fill="#555"/>
<rect x="578" y="368" width="1" height="1" fill="#555"/>
<rect x="578" y="330" width="1" height="1" fill="#555"/>
<rect x="578" y="293" width="1" height="1" fill="#555"/>
<rect x="578" y="255" width="1" height="1" fill="#555"/>
<rect x="578" y="218" width="1" height="1" fill="#555"/>
<rect x="578" y="180" width="1" height="1" fill="#555"/>
<rect x="616" y="706" width="1" height="1" fill="#555"/>
<rect x="616" y="669" width="1" height="1" fill="#555"/>
<rect x="616" y="631" width="1" height="1" fill="#555"/>
<rect x="616" y="594" width="1" height="1" fill="#555"/>
<rect x="616" y="556" width="1" height="1" fill="#555"/>
<rect x="616" y="518" width="1" height="1" fill="#555"/>
<rect x="616" y="481" width="1" height="1" fill="#555"/>
<rect x="616" y="443" width="1" height="1" fill="#555"/>
<rect x="616" y="406" width="1" height="1" fill="#555"/>
<rect x="616" y="368" width="1" height="1" fill="#555"/>
<rect x="616" y="330" width="1" height="1" fill="#555"/>
<rect x="616" y="293" width="1" height="1" fill="#555"/>
<rect x="616" y="255" width="1" height="1" fill="#555"/>
<rect x="616" y="218" width="1" height="1" fill="#555"/>
<rect x="616" y="180" width="1" height="1" fill="#555"/>
<rect x="653" y="706" width="1" height="1" fill="#555"/>
<rect x="653" y="669" width="1" height="1" fill="#555"/>
<rect x="653" y="631" width="1" height="1" fill="#555"/>
<rect x="653" y="594" width="1" height="1" fill="#555"/>
<rect x="653" y="556" width="1" height="1" fill="#555"/>
<rect x="653" y="518" width="1" height="1" fill="#555"/>
<rect x="653" y="481" width="1" height="1" fill="#555"/>
<rect x="653" y="443" width="1" height="1" fill="#555"/>
<rect x="653" y="406" width="1" height="1" fill="#555"/>
<rect x="653" y="368" width="1" height="1" fill="#555"/>
<rect x="653" y="330" width="1" height="1" fill="#555"/>
<rect x="653" y="293" width="1" height="1" fill="#555"/>
<rect x="653" y="255" width="1" height="1" fill="#555"/>
<rect x="653" y="218" width="1" height="1" fill="#555"/>
<rect x="653" y="180" width="1" height="1" fill="#555"/>
<rect x="691" y="706" width="1" height="1" fill="#555"/>
<rect x="691" y="669" width="1" height="1" fill="#555"/>
<rect x="691" y="631" width="1" height="1" fill="#555"/>
<rect x="691" y="594" width="1" height="1" fill="#555"/>
<rect x="691" y="556" width="1" height="1" fill="#555"/>
<rect x="691" y="518" width="1" height="1" fill="#555"/>
<rect x="691" y="481" width="1" height="1" fill="#555"/>
<rect x="691" y="443" width="1" height="1" fill="#555"/>
<rect x="691" y="406" width="1" height="1" fill="#555"/>
<rect x="691" y="368" width="1" height="1" fill="#555"/>
<rect x="691" y="330" width="1" height="1" fill="#555"/>
<rect x="691" y="293" width="1" height="1" fill="#555"/>
<rect x="691" y="255" width="1" height="1" fill="#555"/>
<rect x="691" y="218" width="1" height="1" fill="#555"/>
<rect x="691" y="180" width="1" height="1" fill="#555"/>
<rect x="729" y="706" width="1" height="1" fill="#555"/>
<rect x="729" y="669" width="1" height="1" fill="#555"/>
<rect x="729" y="631" width="1" height="1" fill="#555"/>
<rect x="729" y="594" width="1" height="1" fill="#555"/>
<rect x="729" y="556" width="1" height="1" fill="#555"/>
<rect x="729" y="518" width="1" height="1" fill="#555"/>
<rect x="729" y="481" width="1" height="1" fill="#555"/>
<rect x="729" y="443" width="1" height="1" fill="#555"/>
<rect x="729" y="406" width="1" height="1" fill="#555"/>
<rect x="729" y="368" width="1" height="1" fill="#555"/>
<rect x="729" y="330" width="1" height="1" fill="#555"/>
<rect x="729" y="293" width="1" height="1" fill="#555"/>
<rect x="729" y="255" width="1" height="1" fill="#555"/>
<rect x="729" y="218" width="1" height="1" fill="#555"/>
<rect x="729" y="180" width="1" height="1" fill="#555"/>
<rect x="766" y="706" width="1" height="1" fill="#555"/>
<rect x="766" y="669" width="1" height="1" fill="#555"/>
<rect x="766" y="631" width="1" height="1" fill="#555"/>
<rect x="766" y="594" width="1" height="1" fill="#555"/>
<rect x="766" y="556" width="1" height="1" fill="#555"/>
<rect x="766" y="518" width="1" height="1" fill="#555"/>
<rect x="766" y="481" width="1" height="1" fill="#555"/>
<rect x="766" y="443" width="1" height="1" fill="#555"/>
<rect x="766" y="406" width="1" height="1" fill="#555"/>
<rect x="766" y="368" width="1" height="1" fill="#555"/>
<rect x="766" y="330" width="1" height="1" fill="#555"/>
<rect x="766" y="293" width="1" height="1" fill="#555"/>
<rect x="766" y="255" width="1" height="1" fill="#555"/>
<rect x="766" y="218" width="1" height="1" fill="#555"/>
<rect x="766" y="180" width="1" height="1" fill="#555"/>
<rect x="804" y="706" width="1" height="1" fill="#555"/>
<rect x="804" y="669" width="1" height="1" fill="#555"/>
<rect x="804" y="631" width="1" height="1" fill="#555"/>
<rect x="804" y="594" width="1" height="1" fill="#555"/>
<rect x="804" y="556" width="1" height="1" fill="#555"/>
<rect x="804" y="518" width="1" height="1" fill="#555"/>
<rect x="804" y="481" width="1" height="1" fill="#555"/>
<rect x="804" y="443" width="1" height="1" fill="#555"/>
<rect x="804" y="406" width="1" height="1" fill="#555"/>
<rect x="804" y="368" width="1" height="1" fill="#555"/>
<rect x="804" y="330" width="1" height="1" fill="#555"/>
<rect x="804" y="293" width="1" height="1" fill="#555"/>
<rect x="804" y="255" width="1" height="1" fill="#555"/>
<rect x="804" y="218" width="1" height="1" fill="#555"/>
<rect x="804" y="180" width="1" height="1" fill="#555"/>
<rect x="841" y="706" width="1" height="1" fill="#555"/>
<rect x="841" y="669" width="1" height="1" fill="#555"/>
<rect x="841" y="631" width="1" height="1" fill="#555"/>
<rect x="841" y="594" width="1" height="1" fill="#555"/>
<rect x="841" y="556" width="1" height="1" fill="#555"/>
<rect x="841" y="518" width="1" height="1" fill="#555"/>
<rect x="841" y="481" width="1" height="1" fill="#555"/>
<rect x="841" y="443" width="1" height="1" fill="#555"/>
<rect x="841" y="406" width="1" height="1" fill="#555"/>
<rect x="841" y="368" width="1" height="1" fill="#555"/>
<rect x="841" y="330" width="1" height="1" fill="#555"/>
<rect x="841" y="293" width="1" height="1" fill="#555"/>
<rect x="841" y="255" width="1" height="1" fill="#555"/>
<rect x="841" y="218" width="1" height="1" fill="#555"/>
<rect x="841" y="180" width="1" height="1" fill="#555"/>
<rect x="879" y="706" width="1" height="1" fill="#555"/>
<rect x="879" y="669" width="1" height="1" fill="#555"/>
<rect x="879" y="631" width="1" height="1" fill="#555"/>
<rect x="879" y="594" width="1" height="1" fill="#555"/>
<rect x="879" y="556" width="1" height="1" fill="#555"/>
<rect x="879" y="518" width="1" height="1" fill="#555"/>
<rect x="879" y="481" width="1" height="1" fill="#555"/>
<rect x="879" y="443" width="1" height="1" fill="#555"/>
<rect x="879" y="406" width="1" height="1" fill="#555"/>
<rect x="879" y="368" width="1" height="1" fill="#555"/>
<rect x="879" y="330" width="1" height="1" fill="#555"/>
<rect x="879" y="293" width="1" height="1" fill="#555"/>
<rect x="879" y="255" width="1" height="1" fill="#555"/>
<rect x="879" y="218" width="1" height="1" fill="#555"/>
<rect x="879" y="180" width="1" height="1" fill="#555"/>
<rect x="917" y="706" width="1" height="1" fill="#555"/>
<rect x="917" y="669" width="1" height="1" fill="#555"/>
<rect x="917" y="631" width="1" height="1" fill="#555"/>
<rect x="917" y="594" width="1" height="1" fill="#555"/>
<rect x="917" y="556" width="1" height="1" fill="#555"/>
<rect x="917" y="518" width="1" height="1" fill="#555"/>
<rect x="917" y="481" width="1" height="1" fill="#555"/>
<rect x="917" y="443" width="1" height="1" fill="#555"/>
<rect x="917" y="406" width="1" height="1" fill="#555"/>
<rect x="917" y="368" width="1" height="1" fill="#555"/>
<rect x="917" y="330" width="1" height="1" fill="#555"/>
<rect x="917" y="293" width="1" height="1" fill="#555"/>
<rect x="917" y="255" width="1" height="1" fill="#555"/>
<rect x="917" y="218" width="1" height="1" fill="#555"/>
<rect x="917" y="180" width="1" height="1" fill="#555"/>
<rect x="954" y="706" width="1" height="1" fill="#555"/>
<rect x="954" y="669" width="1" height="1" fill="#555"/>
<rect x="954" y="631" width="1" height="1" fill="#555"/>
<rect x="954" y="594" width="1" height="1" fill="#555"/>
<rect x="954" y="556" width="1" height="1" fill="#555"/>
<rect x="954" y="518" width="1" height="1" fill="#555"/>
<rect x="954" y="481" width="1" height="1" fill="#555"/>
<rect x="954" y="443" width="1" height="1" fill="#555"/>
<rect x="954" y="406" width="1" height="1" fill="#555"/>
<rect x="954" y="368" width="1" height="1" fill="#555"/>
<rect x="954" y="330" width="1" height="1" fill="#555"/>
<rect x="954" y="293" width="1" height="1" fill="#555"/>
<rect x="954" y="255" width="1" height="1" fill="#555"/>
<rect x="954" y="218" width="1" height="1" fill="#555"/>
<rect x="954" y="180" width="1" height="1" fill="#555"/>
<rect x="992" y="706" width="1" height="1" fill="#555"/>
<rect x="992" y="669" width="1" height="1" fill="#555"/>
<rect x="992" y="631" width="1" height="1" fill="#555"/>
<rect x="992" y="594" width="1" height="1" fill="#555"/>
<rect x="992" y="556" width="1" height="1" fill="#555"/>
<rect x="992" y="518" width="1" height="1" fill="#555"/>
<rect x="992" y="481" width="1" height="1" fill="#555"/>
<rect x="992" y="443" width="1" height="1" fill="#555"/>
<rect x="992" y="406" width="1" height="1" fill="#555"/>
<rect x="992" y="368" width="1" height="1" fill="#555"/>
<rect x="992" y="330" width="1" height="1" fill="#555"/>
<rect x="992" y="293" width="1" height="1" fill="#555"/>
<rect x="992" y="255" width="1" height="1" fill="#555"/>
<rect x="992" y="218" width="1" height="1" fill="#555"/>
<rect x="992" y="180" width="1" height="1" fill="#555"/>
<rect x="1029" y="706" width="1" height="1" fill="#555"/>
<rect x="1029" y="669" width="1" height="1" fill="#555"/>
<rect x="1029" y="631" width="1" height="1" fill="#555"/>
<rect x="1029" y="594" width="1" height="1" fill="#555"/>
<rect x="1029" y="556" width="1" height="1" fill="#555"/>
<rect x="1029" y="518" width="1" height="1" fill="#555"/>
<rect x="1029" y="481" width="1" height="1" fill="#555"/>
<rect x="1029" y="443" width="1" height="1" fill="#555"/>
<rect x="1029" y="406" width="1" height="1" fill="#555"/>
<rect x="1029" y="368" width="1" height="1" fill="#555"/>
<rect x="1029" y="330" width="1" height="1" fill="#555"/>
<rect x="1029" y="293" width="1" height="1" fill="#555"/>
<rect x="1029" y="255" width="1" height="1" fill="#555"/>
<rect x="1029" y="218" width="1" height="1" fill="#555"/>
<rect x="1029" y="180" width="1" height="1" fill="#555"/>
<rect x="1067" y="706" width="1" height="1" fill="#555"/>
<rect x="1067" y="669" width="1" height="1" fill="#555"/>
<rect x="1067" y="631" width="1" height="1" fill="#555"/>
<rect x="1067" y="594" width="1" height="1" fill="#555"/>
<rect x="1067" y="556" width="1" height="1" fill="#555"/>
<rect x="1067" y="518" width="1" height="1" fill="#555"/>
<rect x="1067" y="481" width="1" height="1" fill="#555"/>
<rect x="1067" y="443" width="1" height="1" fill="#555"/>
<rect x="1067" y="406" width="1" height="1" fill="#555"/>
<rect x="1067" y="368" width="1" height="1" fill="#555"/>
<rect x="1067" y="330" width="1" height="1" fill="#555"/>
<rect x="1067" y="293" width="1" height="1" fill="#555"/>
<rect x="1067" y="255" width="1" height="1" fill="#555"/>
<rect x="1067" y="218" width="1" height="1" fill="#555"/>
<rect x="1067" y="180" width="1" height="1" fill="#555"/>
<rect x="1105" y="706" width="1" height="1" fill="#555"/>
<rect x="1105" y="669" width="1" height="1" fill="#555"/>
<rect x="1105" y="631" width="1" height="1" fill="#555"/>
<rect x="1105" y="594" width="1" height="1" fill="#555"/>
<rect x="1105" y="556" width="1" height="1" fill="#555"/>
<rect x="1105" y="518" width="1" height="1" fill="#555"/>
<rect x="1105" y="481" width="1" height="1" fill="#555"/>
<rect x="1105" y="443" width="1" height="1" fill="#555"/>
<rect x="1105" y="406" width="1" height="1" fill="#555"/>
<rect x="1105" y="368" width="1" height="1" fill="#555"/>
<rect x="1105" y="330" width="1" height="1" fill="#555"/>
<rect x="1105" y="293" width="1" height="1" fill="#555"/>
<rect x="1105" y="255" width="1" height="1" fill="#555"/>
<rect x="1105" y="218" width="1" height="1" fill="#555"/>
<rect x="1105" y="180" width="1" height="1" fill="#555"/><g fill="none" stroke="#4b6725" stroke-width="1" stroke-linejoin="round">
<polyline points="616.7,289.1 614.8,283.2 608.4,270.9 601.3,270.1 563.4,280.3 555.1,277.3 547.5,278.4 551.5,293.8 530.2,300.2 526.2,293.8 493.5,303.3 492.3,316.4 481.6,327.0 493.5,337.2 479.2,347.2 480.4,354.3 485.2,357.8 494.6,356.6 504.1,366.6 514.8,363.7"/>
<polyline points="514.8,363.7 516.0,353.1 526.6,351.4 534.9,347.2 544.4,354.3 543.2,368.5"/>
<polyline points="514.8,363.7 531.4,373.7 539.7,373.7"/>
<polyline points="527.8,351.4 532.6,366.1 540.9,369.7 565.7,381.5"/>
<polyline points="465.0,352.4 492.3,372.0 497.0,384.6"/>
<polyline points="455.5,359.5 465.0,355.9 467.4,366.1 466.2,370.9 473.3,378.0 470.9,383.2 461.5,385.1 455.5,379.1 455.1,368.5 455.5,359.5"/>
<polyline points="473.3,379.1 497.0,385.1 524.3,395.0"/>
<polyline points="442.5,398.1 446.1,387.0 450.3,388.6 450.8,395.0 442.5,398.1"/>
<polyline points="450.8,395.0 465.0,395.0 497.0,385.1"/>
<polyline points="524.3,398.8 486.4,407.6 484.0,405.9 470.9,408.8 474.5,424.2 480.4,424.2 480.4,438.4 499.4,433.6 505.3,434.4 559.8,420.1"/>
<polyline points="470.9,406.4 465.0,408.8 453.2,421.8 455.5,438.4 450.8,438.9 444.9,420.1 428.3,432.5 429.5,450.0"/>
<polyline points="504.1,402.8 480.4,424.2"/>
<polyline points="524.3,398.8 517.2,415.9 500.6,430.1"/>
<polyline points="505.3,434.4 507.7,445.5 508.9,450.0"/>
<polyline points="507.7,437.2 514.8,436.0 529.0,443.1 533.7,450.0"/>
<polyline points="551.5,378.0 548.0,383.9"/>
<polyline points="565.7,381.5 563.4,387.4 566.9,401.7"/>
<polyline points="575.2,380.3 576.4,387.4 585.9,398.1"/>
<polyline points="565.7,381.5 576.4,379.1 577.6,374.4 584.7,372.7 596.5,380.3 617.9,376.8"/>
<polyline points="596.5,380.3 593.0,382.7 597.7,392.2 596.5,404.0 589.4,413.5 581.1,414.7 572.8,412.3"/>
<polyline points="596.5,380.3 602.5,381.5 602.5,387.4 597.7,392.2"/>
<polyline points="620.0,342.4 611.9,343.6 609.6,349.5 609.6,356.6 616.7,366.1 619.1,376.8"/>
<polyline points="623.0,259.5 627.8,255.2 638.4,255.2 639.6,258.3 632.5,264.2 626.6,264.2 623.0,259.5"/>
<polyline points="641.3,267.8 649.1,265.4 666.9,267.1 672.1,277.3 659.8,278.9 650.3,277.3 641.3,267.8"/>
<polyline points="679.2,277.3 683.5,272.5 691.8,274.9 694.1,283.2 679.2,277.3"/>
<polyline points="614.7,282.0 615.9,289.1 647.9,288.4 654.5,302.1 638.4,308.1 634.9,317.5 638.4,332.9 631.3,338.9 614.7,343.6 610.0,348.3"/>
<polyline points="655.0,335.3 660.9,328.2 660.2,319.9 674.0,314.0 671.6,298.6 678.7,291.5 687.0,290.3 688.2,297.4 695.3,303.3 707.2,302.1 714.3,311.1 728.5,315.2 724.9,335.3 733.2,334.1 738.0,341.9 743.9,340.0 754.5,344.3 760.5,357.8 753.4,360.2 752.2,369.7 755.7,376.8 763.6,375.1 766.4,385.5 773.5,384.6 782.5,393.4 790.1,390.3 803.1,400.5 803.1,414.7 790.1,417.8 787.7,434.8 791.3,450.0"/>
<polyline points="652.7,338.9 655.0,335.3"/>
<polyline points="652.7,338.9 653.8,369.7"/>
<polyline points="655.0,335.3 666.9,346.0 672.1,346.0 678.7,355.5 687.0,353.1 689.4,373.2 696.5,388.6 678.7,394.5 676.4,398.1 681.1,413.5 695.3,411.6 698.9,417.1 707.2,421.8 710.7,432.5 711.9,450.0"/>
<polyline points="668.1,347.2 659.8,369.7"/>
<polyline points="681.1,356.6 663.3,375.6"/>
<polyline points="687.0,373.2 682.3,376.8 654.5,406.4"/>
<polyline points="678.7,406.4 660.9,418.2"/>
<polyline points="707.2,432.5 698.9,436.0 688.2,447.9"/>
<polyline points="692.9,447.9 709.5,445.5"/>
<polyline points="788.9,440.0 791.3,448.3 800.8,448.3 805.5,465.6 790.1,469.6 793.6,479.1 781.8,480.3 773.5,498.1 785.4,496.9 788.9,519.4 773.5,522.9 774.7,534.8 756.9,534.8 753.4,547.8 762.8,552.6 762.8,558.5 749.8,577.4 738.0,572.2 723.3,593.6 709.5,589.3 707.2,584.1 697.7,583.4 700.5,575.1 698.9,566.8 694.1,563.7 679.9,568.0 675.2,556.1 685.4,553.3 683.5,543.1 677.1,540.0 675.2,527.2 651.5,525.8"/>
<polyline points="692.9,440.0 685.8,447.1 674.0,456.1 668.1,459.0"/>
<polyline points="678.7,453.0 709.5,446.6"/>
<polyline points="674.0,465.6 711.9,459.4"/>
<polyline points="711.9,440.0 712.4,462.5 698.9,466.5 701.9,488.6 692.9,488.6 688.2,492.1 679.9,486.2 675.2,480.8"/>
<polyline points="675.2,480.8 698.9,483.4"/>
<polyline points="679.9,486.2 675.2,490.9 679.9,506.4 670.4,508.7 652.7,503.5 646.7,511.1"/>
<polyline points="651.5,530.0 653.8,534.8 649.1,538.3 640.8,539.5 638.4,549.0 630.1,573.9 620.7,558.5 610.0,556.1"/>
<polyline points="645.5,543.1 655.0,582.2 654.5,608.2"/>
<polyline points="647.9,543.1 659.8,572.7 664.5,577.4 674.0,598.8 672.8,622.5"/>
<polyline points="664.5,577.4 703.6,601.1 704.8,604.7"/>
<polyline points="698.9,609.4 703.6,604.7 707.2,605.9 707.2,613.0 700.0,614.2 698.9,609.4"/>
<polyline points="674.0,600.0 688.2,614.2"/>
<polyline points="638.4,615.4 646.7,610.6 657.4,608.7 659.8,617.7 653.8,624.8 640.8,624.8 637.3,620.1 638.4,615.4"/>
<polyline points="671.1,623.6 678.7,622.5 677.5,627.2 672.1,627.2 671.1,623.6"/>
<polyline points="428.3,440.0 429.5,454.2 429.5,475.5 433.7,489.8 440.1,487.9 444.9,489.8 448.0,496.9 441.3,504.0 444.9,513.0 454.4,512.3 462.7,519.4 463.8,526.5 452.7,529.6 452.0,540.7 462.7,549.0 467.4,557.3 488.7,550.9 495.8,534.8 487.5,530.0 491.1,522.9 490.6,508.7 504.1,505.9 506.5,498.1 501.8,486.2 519.5,477.9"/>
<polyline points="491.1,450.7 497.0,447.1 508.2,445.9 521.9,451.4 534.9,449.5 552.7,454.7 566.9,464.9"/>
<polyline points="491.1,450.7 490.6,461.3 484.5,470.8 485.9,480.3 491.1,482.7 492.3,489.8 501.8,486.2"/>
<polyline points="490.6,461.3 505.3,458.5 521.9,451.4"/>
<polyline points="487.5,468.0 495.8,468.4 519.5,473.2"/>
<polyline points="524.3,440.0 533.7,447.1 538.5,453.0"/>
<polyline points="506.5,440.0 508.2,445.9"/>
<polyline points="536.1,476.7 518.3,493.3 511.2,509.9 511.2,530.0 507.7,562.0 501.8,563.2 504.1,582.2 510.0,584.5 506.5,595.2 513.6,600.0 526.6,603.0 537.3,614.2 544.4,615.4 551.5,623.6 557.4,620.6 557.9,614.2 566.9,615.8"/>
<polyline points="511.2,530.0 518.3,560.9 520.7,563.7 528.5,558.5 527.8,541.9 543.2,540.7 545.6,527.7 542.7,511.1 561.7,506.4 563.4,520.1 588.2,509.9 596.5,513.9 598.9,524.1 593.0,537.2 591.8,553.3 600.1,553.3 604.8,558.0 610.8,556.1 620.0,557.3"/>
<polyline points="511.2,518.2 506.5,520.6 498.2,531.2"/>
<polyline points="481.1,569.9 484.0,565.6 488.7,570.3 485.2,575.1 482.1,574.6 481.1,569.9"/>
<polyline points="607.2,522.9 609.6,534.8 611.5,553.7"/>
<polyline points="596.5,513.5 602.5,508.7"/>
</g>
<g fill="none" stroke="#4b6725" stroke-width="1" stroke-linejoin="round">
<polyline points="560.0,614.4 569.6,614.9 570.1,626.1 574.4,629.3 592.5,627.2 598.4,632.0 615.5,627.7 617.6,615.5 622.4,611.2 620.8,595.2 624.5,589.3 630.4,586.7 633.1,579.7 629.9,573.9 622.4,573.3 620.8,560.0"/>
<polyline points="629.9,573.9 637.3,560.0"/>
</g>
<polygon fill="#6a9a2e" stroke="#6a9a2e" stroke-width="0.6" stroke-linejoin="round" points="523.1,395.6 542.5,392.8 543.4,382.3 545.5,381.9 547.7,385.2 547.2,395.8 562.4,402.7 571.9,400.2 582.3,397.7 575.7,387.1 576.6,386.6 586.6,398.0 582.8,402.7 571.0,405.3 571.4,411.7 580.4,415.7 587.1,413.8 596.1,404.1 592.0,414.4 598.5,424.8 615.5,438.3 617.1,436.8 627.7,435.2 646.9,417.6 646.9,394.1 654.4,370.1 658.7,369.8 662.9,376.0 658.1,381.3 653.3,394.1 653.3,406.9 656.0,406.9 653.9,416.5 661.9,418.1 652.3,422.9 634.1,438.9 631.5,445.4 636.2,462.0 639.8,465.5 663.5,465.0 674.1,456.7 669.4,465.5 675.3,467.3 671.8,473.8 676.5,480.9 667.0,473.8 656.4,471.5 640.9,473.8 631.5,477.4 631.5,482.1 635.0,485.7 643.3,505.8 643.3,510.3 647.1,512.4 650.3,526.8 641.2,518.3 634.8,509.2 628.4,496.4 619.9,493.4 610.3,495.9 606.0,510.3 607.6,524.1 603.9,522.0 600.7,510.3 603.3,500.7 601.2,490.0 601.2,488.0 596.3,472.3 581.3,462.3 573.0,469.8 567.7,478.1 556.5,476.0 546.5,475.2 531.6,475.6 520.0,477.7 519.0,473.1 531.6,471.0 546.5,470.2 566.8,470.6 567.2,465.7 581.3,454.0 587.1,456.5 592.9,461.5 601.2,471.9 606.2,470.6 611.2,465.7 612.0,454.9 609.5,446.6 602.9,435.0 604.1,436.4 584.2,423.1 571.9,419.3 559.6,420.3 563.8,414.6 562.4,407.9 543.4,398.0 523.5,399.9"/>
<g stroke="#dd1414" stroke-width="1" fill="none"><circle cx="616.4" cy="443.4" r="5"/><line x1="596" y1="443.4" x2="637" y2="443.4"/><line x1="616.4" y1="423" x2="616.4" y2="464"/></g></svg>
</div>
<div class="a" style="left:95px;top:132px;width:1059px;height:23px;overflow:hidden">
<div class="a" style="left:-6px;top:16px;width:1px;height:7px;background:#5a5a5a"></div>
<div class="a" style="left:-35.1px;top:1px;width:60px;text-align:center;font-size:8.8px;color:#111">-1.4</div>
<div class="a" style="left:32px;top:16px;width:1px;height:7px;background:#5a5a5a"></div>
<div class="a" style="left:2.5px;top:1px;width:60px;text-align:center;font-size:8.8px;color:#111">-1.3</div>
<div class="a" style="left:70px;top:16px;width:1px;height:7px;background:#5a5a5a"></div>
<div class="a" style="left:40.1px;top:1px;width:60px;text-align:center;font-size:8.8px;color:#111">-1.2</div>
<div class="a" style="left:107px;top:16px;width:1px;height:7px;background:#5a5a5a"></div>
<div class="a" style="left:77.7px;top:1px;width:60px;text-align:center;font-size:8.8px;color:#111">-1.1</div>
<div class="a" style="left:145px;top:16px;width:1px;height:7px;background:#5a5a5a"></div>
<div class="a" style="left:115.3px;top:1px;width:60px;text-align:center;font-size:8.8px;color:#111">-1</div>
<div class="a" style="left:182px;top:16px;width:1px;height:7px;background:#5a5a5a"></div>
<div class="a" style="left:152.9px;top:1px;width:60px;text-align:center;font-size:8.8px;color:#111">-0.9</div>
<div class="a" style="left:220px;top:16px;width:1px;height:7px;background:#5a5a5a"></div>
<div class="a" style="left:190.5px;top:1px;width:60px;text-align:center;font-size:8.8px;color:#111">-0.8</div>
<div class="a" style="left:258px;top:16px;width:1px;height:7px;background:#5a5a5a"></div>
<div class="a" style="left:228.1px;top:1px;width:60px;text-align:center;font-size:8.8px;color:#111">-0.7</div>
<div class="a" style="left:295px;top:16px;width:1px;height:7px;background:#5a5a5a"></div>
<div class="a" style="left:265.7px;top:1px;width:60px;text-align:center;font-size:8.8px;color:#111">-0.6</div>
<div class="a" style="left:333px;top:16px;width:1px;height:7px;background:#5a5a5a"></div>
<div class="a" style="left:303.3px;top:1px;width:60px;text-align:center;font-size:8.8px;color:#111">-0.5</div>
<div class="a" style="left:370px;top:16px;width:1px;height:7px;background:#5a5a5a"></div>
<div class="a" style="left:340.9px;top:1px;width:60px;text-align:center;font-size:8.8px;color:#111">-0.4</div>
<div class="a" style="left:408px;top:16px;width:1px;height:7px;background:#5a5a5a"></div>
<div class="a" style="left:378.5px;top:1px;width:60px;text-align:center;font-size:8.8px;color:#111">-0.3</div>
<div class="a" style="left:446px;top:16px;width:1px;height:7px;background:#5a5a5a"></div>
<div class="a" style="left:416.1px;top:1px;width:60px;text-align:center;font-size:8.8px;color:#111">-0.2</div>
<div class="a" style="left:483px;top:16px;width:1px;height:7px;background:#5a5a5a"></div>
<div class="a" style="left:453.7px;top:1px;width:60px;text-align:center;font-size:8.8px;color:#111">-0.1</div>
<div class="a" style="left:521px;top:16px;width:1px;height:7px;background:#5a5a5a"></div>
<div class="a" style="left:491.3px;top:1px;width:60px;text-align:center;font-size:8.8px;color:#111">0</div>
<div class="a" style="left:558px;top:16px;width:1px;height:7px;background:#5a5a5a"></div>
<div class="a" style="left:528.9px;top:1px;width:60px;text-align:center;font-size:8.8px;color:#111">0.1</div>
<div class="a" style="left:596px;top:16px;width:1px;height:7px;background:#5a5a5a"></div>
<div class="a" style="left:566.5px;top:1px;width:60px;text-align:center;font-size:8.8px;color:#111">0.2</div>
<div class="a" style="left:634px;top:16px;width:1px;height:7px;background:#5a5a5a"></div>
<div class="a" style="left:604.1px;top:1px;width:60px;text-align:center;font-size:8.8px;color:#111">0.3</div>
<div class="a" style="left:671px;top:16px;width:1px;height:7px;background:#5a5a5a"></div>
<div class="a" style="left:641.7px;top:1px;width:60px;text-align:center;font-size:8.8px;color:#111">0.4</div>
<div class="a" style="left:709px;top:16px;width:1px;height:7px;background:#5a5a5a"></div>
<div class="a" style="left:679.3px;top:1px;width:60px;text-align:center;font-size:8.8px;color:#111">0.5</div>
<div class="a" style="left:746px;top:16px;width:1px;height:7px;background:#5a5a5a"></div>
<div class="a" style="left:716.9px;top:1px;width:60px;text-align:center;font-size:8.8px;color:#111">0.6</div>
<div class="a" style="left:784px;top:16px;width:1px;height:7px;background:#5a5a5a"></div>
<div class="a" style="left:754.5px;top:1px;width:60px;text-align:center;font-size:8.8px;color:#111">0.7</div>
<div class="a" style="left:822px;top:16px;width:1px;height:7px;background:#5a5a5a"></div>
<div class="a" style="left:792.1px;top:1px;width:60px;text-align:center;font-size:8.8px;color:#111">0.8</div>
<div class="a" style="left:859px;top:16px;width:1px;height:7px;background:#5a5a5a"></div>
<div class="a" style="left:829.7px;top:1px;width:60px;text-align:center;font-size:8.8px;color:#111">0.9</div>
<div class="a" style="left:897px;top:16px;width:1px;height:7px;background:#5a5a5a"></div>
<div class="a" style="left:867.3px;top:1px;width:60px;text-align:center;font-size:8.8px;color:#111">1</div>
<div class="a" style="left:934px;top:16px;width:1px;height:7px;background:#5a5a5a"></div>
<div class="a" style="left:904.9px;top:1px;width:60px;text-align:center;font-size:8.8px;color:#111">1.1</div>
<div class="a" style="left:972px;top:16px;width:1px;height:7px;background:#5a5a5a"></div>
<div class="a" style="left:942.5px;top:1px;width:60px;text-align:center;font-size:8.8px;color:#111">1.2</div>
<div class="a" style="left:1010px;top:16px;width:1px;height:7px;background:#5a5a5a"></div>
<div class="a" style="left:980.1px;top:1px;width:60px;text-align:center;font-size:8.8px;color:#111">1.3</div>
</div>
<div class="a" style="left:72px;top:155px;width:23px;height:577px;overflow:hidden">
<div class="a" style="left:16px;top:551px;width:7px;height:1px;background:#5a5a5a"></div>
<div class="a" style="left:-24px;top:545.9px;width:60px;height:12px;line-height:12px;text-align:center;font-size:9.6px;color:#111;transform:rotate(-90deg)">-0.7</div>
<div class="a" style="left:16px;top:514px;width:7px;height:1px;background:#5a5a5a"></div>
<div class="a" style="left:-24px;top:508.3px;width:60px;height:12px;line-height:12px;text-align:center;font-size:9.6px;color:#111;transform:rotate(-90deg)">-0.6</div>
<div class="a" style="left:16px;top:476px;width:7px;height:1px;background:#5a5a5a"></div>
<div class="a" style="left:-24px;top:470.7px;width:60px;height:12px;line-height:12px;text-align:center;font-size:9.6px;color:#111;transform:rotate(-90deg)">-0.5</div>
<div class="a" style="left:16px;top:439px;width:7px;height:1px;background:#5a5a5a"></div>
<div class="a" style="left:-24px;top:433.1px;width:60px;height:12px;line-height:12px;text-align:center;font-size:9.6px;color:#111;transform:rotate(-90deg)">-0.4</div>
<div class="a" style="left:16px;top:401px;width:7px;height:1px;background:#5a5a5a"></div>
<div class="a" style="left:-24px;top:395.5px;width:60px;height:12px;line-height:12px;text-align:center;font-size:9.6px;color:#111;transform:rotate(-90deg)">-0.3</div>
<div class="a" style="left:16px;top:363px;width:7px;height:1px;background:#5a5a5a"></div>
<div class="a" style="left:-24px;top:357.9px;width:60px;height:12px;line-height:12px;text-align:center;font-size:9.6px;color:#111;transform:rotate(-90deg)">-0.2</div>
<div class="a" style="left:16px;top:326px;width:7px;height:1px;background:#5a5a5a"></div>
<div class="a" style="left:-24px;top:320.3px;width:60px;height:12px;line-height:12px;text-align:center;font-size:9.6px;color:#111;transform:rotate(-90deg)">-0.1</div>
<div class="a" style="left:16px;top:288px;width:7px;height:1px;background:#5a5a5a"></div>
<div class="a" style="left:-24px;top:282.7px;width:60px;height:12px;line-height:12px;text-align:center;font-size:9.6px;color:#111;transform:rotate(-90deg)">0</div>
<div class="a" style="left:16px;top:251px;width:7px;height:1px;background:#5a5a5a"></div>
<div class="a" style="left:-24px;top:245.1px;width:60px;height:12px;line-height:12px;text-align:center;font-size:9.6px;color:#111;transform:rotate(-90deg)">0.1</div>
<div class="a" style="left:16px;top:213px;width:7px;height:1px;background:#5a5a5a"></div>
<div class="a" style="left:-24px;top:207.5px;width:60px;height:12px;line-height:12px;text-align:center;font-size:9.6px;color:#111;transform:rotate(-90deg)">0.2</div>
<div class="a" style="left:16px;top:175px;width:7px;height:1px;background:#5a5a5a"></div>
<div class="a" style="left:-24px;top:169.9px;width:60px;height:12px;line-height:12px;text-align:center;font-size:9.6px;color:#111;transform:rotate(-90deg)">0.3</div>
<div class="a" style="left:16px;top:138px;width:7px;height:1px;background:#5a5a5a"></div>
<div class="a" style="left:-24px;top:132.3px;width:60px;height:12px;line-height:12px;text-align:center;font-size:9.6px;color:#111;transform:rotate(-90deg)">0.4</div>
<div class="a" style="left:16px;top:100px;width:7px;height:1px;background:#5a5a5a"></div>
<div class="a" style="left:-24px;top:94.7px;width:60px;height:12px;line-height:12px;text-align:center;font-size:9.6px;color:#111;transform:rotate(-90deg)">0.5</div>
<div class="a" style="left:16px;top:63px;width:7px;height:1px;background:#5a5a5a"></div>
<div class="a" style="left:-24px;top:57.1px;width:60px;height:12px;line-height:12px;text-align:center;font-size:9.6px;color:#111;transform:rotate(-90deg)">0.6</div>
<div class="a" style="left:16px;top:25px;width:7px;height:1px;background:#5a5a5a"></div>
<div class="a" style="left:-24px;top:19.5px;width:60px;height:12px;line-height:12px;text-align:center;font-size:9.6px;color:#111;transform:rotate(-90deg)">0.7</div>
</div>
<div class="a" style="left:1138px;top:155px;width:16px;height:577px;background:#f7f7f7"></div>
<div class="a" style="left:95px;top:732px;width:1001px;height:16px;background:#f8f8f8"></div>
<div class="a" style="left:1096px;top:732px;width:58px;height:16px;background:#ebebeb;font-size:13px;text-align:right;line-height:17px;color:#111">0.1 &lt; 1</div>
<div class="a" style="left:156px;top:737px;width:880px;height:8px;background:#808080;border-radius:4px"></div>
<div class="a" style="left:1143px;top:304px;width:8px;height:278px;background:#808080;border-radius:4px"></div>
<div class="a" style="left:1154px;top:108px;width:1px;height:690px;background:#b8b8b8"></div>

<!-- command area -->
<div class="a" style="left:72px;top:748px;width:1082px;height:2px;background:#c2c2c2"></div>
<div class="a" style="left:72px;top:750px;width:1082px;height:20px;background:#fff;font-size:13.5px;color:#1515c8;line-height:17px;padding-left:5px"><i>Opdracht:</i> blockedit</div>
<div class="a" style="left:1144px;top:750px;width:7px;height:17px;background:#808080;border-radius:3.5px"></div>
<div class="a" style="left:72px;top:770px;width:1082px;height:2px;background:#cfcfcf"></div>
<div class="a" style="left:72px;top:772px;width:1082px;height:26px;background:#ececec"></div>
<div class="a" style="left:73px;top:777px;font-size:13.5px;color:#111">Opdracht:</div>
<div class="a" style="left:137px;top:776px;width:989px;height:18px;background:#fff"></div>
<div class="a" style="left:1127px;top:772px;width:26px;height:26px;background:#f2f2f2;border:1px solid #b0b0b0"></div>
<div class="a" style="left:1131px;top:778px;width:17px;height:13px;border:1.5px solid #111;border-top:3px solid #111;background:#fff"></div>

<!-- right docks -->
<div class="a" style="left:1155px;top:108px;width:300px;height:690px;background:#e6e6e6"></div>
<svg class="a" style="left:1155px;top:108px" width="300" height="690" viewBox="1155 108 300 690">
<defs>
<linearGradient id="gtitle" x1="0" y1="0" x2="0" y2="1"><stop offset="0" stop-color="#efefef"/><stop offset="1" stop-color="#dedede"/></linearGradient>
<linearGradient id="gpb" x1="0" y1="0" x2="0" y2="1"><stop offset="0" stop-color="#e8e8e8"/><stop offset="1" stop-color="#f5f5f5"/></linearGradient>
<symbol id="eye" overflow="visible"><path d="M0.3 5.8 C1.8 1.6 5 0 8 0 C11 0 13.6 2 14.7 5.6 C13.4 9.2 10.8 11 7.5 11 C4 11 1.4 9 0.3 5.8 Z" fill="currentColor"/><ellipse cx="7.5" cy="6.3" rx="4.6" ry="3" fill="var(--ei,#fff)"/><circle cx="7.5" cy="5" r="2.7" fill="currentColor"/></symbol>
<symbol id="lock" overflow="visible"><path d="M2.5 7 V4.5 C2.5 1.8 4 0.5 6 0.5 C8 0.5 9.5 1.8 9.5 4.5 V7" fill="none" stroke="currentColor" stroke-width="1.8"/><rect x="0.5" y="7" width="11" height="8" rx="1" fill="currentColor"/></symbol>
<symbol id="pencil" overflow="visible"><path d="M0 14 L1 10.5 L11.5 0.3 L14.2 3 L3.7 13.3 Z" fill="#f0b43c" stroke="#9a6a1a" stroke-width="0.7"/><path d="M11.5 0.3 L14.2 3 L12.8 4.4 L10.1 1.7 Z" fill="#e03030"/><path d="M0 14 L1 10.5 L3.7 13.3 Z" fill="#5a4a3a"/></symbol>
</defs>
<!-- Blokkenlijst -->
<rect x="1155" y="108" width="300" height="21" fill="url(#gtitle)"/>
<g transform="translate(1164,118)"><circle r="7.2" fill="#6c6c6c"/><path d="M-3 -3 L3 3 M3 -3 L-3 3" stroke="#eee" stroke-width="1.8"/></g>
<g transform="translate(1182,118)"><circle r="7.2" fill="#6c6c6c"/><rect x="-1.8" y="-4.2" width="5.5" height="4.5" fill="none" stroke="#eee" stroke-width="1.2"/><rect x="-4.2" y="-1.5" width="5.5" height="4.5" fill="#6c6c6c" stroke="#eee" stroke-width="1.2"/></g>
<rect x="1155" y="129.5" width="300" height="28" fill="#b2b2b2"/>
<g fill="url(#gpb)">
<rect x="1156.5" y="131" width="35.5" height="24"/><rect x="1194" y="131" width="35.3" height="24"/><rect x="1231.3" y="131" width="35.6" height="24"/><rect x="1268.9" y="131" width="35.2" height="24"/><rect x="1306.1" y="131" width="35.7" height="24"/><rect x="1343.8" y="131" width="35.2" height="24"/><rect x="1381" y="131" width="35.9" height="24" fill="#f1f1f1"/><rect x="1418.9" y="131" width="34.6" height="24"/>
</g>
<use href="#eye" x="1166.6" y="137" style="color:#000"/>
<use href="#eye" x="1203.6" y="137" style="color:#a4a4a4"/>
<path d="M1242.5 143 H1255 M1248.75 136.8 V149.2" stroke="#7a0000" stroke-width="4"/>
<path d="M1242.5 143 H1255 M1248.75 136.8 V149.2" stroke="#f00" stroke-width="2.6"/>
<path d="M1279.8 142.8 H1291.8" stroke="#7a0000" stroke-width="3.6"/>
<path d="M1279.8 142.8 H1291.8" stroke="#f00" stroke-width="2.4"/>
<text x="1316.5" y="148" font-family="Liberation Sans" font-size="12" fill="#111">a</text>
<text x="1324.2" y="148" font-family="Liberation Sans" font-size="12" fill="#111">b</text>
<line x1="1323.5" y1="136" x2="1323.5" y2="149" stroke="#111" stroke-width="0.9"/>
<use href="#pencil" x="1354" y="136"/>
<rect x="1393.5" y="136" width="11.2" height="13" fill="#e4e4e4" stroke="#d0d0d0" stroke-width="0.5"/>
<path d="M1396 138 C1400 138 1401 139.5 1399.5 142 L1398.5 145" fill="none" stroke="#7aa0f0" stroke-width="1.8"/>
<path d="M1396 144.5 L1399 148.5 L1402 144.5 Z" fill="#7aa0f0"/>
<rect x="1431" y="137.7" width="10.2" height="10.1" fill="#e86040" stroke="#c04020" stroke-width="0.6"/>
<path d="M1433.5 140.2 L1438.7 145.3 M1438.7 140.2 L1433.5 145.3" stroke="#fff" stroke-width="1.6"/>
<rect x="1155" y="157.5" width="300" height="150" fill="#fff"/>
<rect x="1155" y="157.5" width="1.2" height="150" fill="#c4c4c4"/>
<rect x="1156" y="237" width="297.5" height="20" fill="#d4d4d4"/>
<use href="#eye" x="1161.5" y="161.2" style="color:#000"/>
<use href="#eye" x="1161.5" y="181.2" style="color:#000"/>
<use href="#eye" x="1161.5" y="201.2" style="color:#000"/>
<use href="#eye" x="1161.5" y="221.2" style="color:#000"/>
<use href="#eye" x="1161.5" y="241.2" style="color:#000"/>
<use href="#eye" x="1161.5" y="261.2" style="color:#000"/>
<g font-family="Liberation Sans" font-size="13.2" fill="#111">
<text x="1205.5" y="171.8">Model (*Model_Space)</text>
<text x="1205.5" y="191.8">Layout1 (*Paper_Space)</text>
<text x="1205.5" y="211.8">Bank</text>
<text x="1205.5" y="231.8">Boom A</text>
<text x="1205.5" y="251.8">Boom B</text>
<text x="1205.5" y="271.8">Prullenbak</text>
</g>
<rect x="1155" y="307.3" width="300" height="2" fill="#c0c0c0"/>
<!-- Lagenlijst -->
<rect x="1155" y="309.3" width="300" height="21.5" fill="url(#gtitle)"/>
<g transform="translate(1164,319.5)"><circle r="7.2" fill="#6c6c6c"/><path d="M-3 -3 L3 3 M3 -3 L-3 3" stroke="#eee" stroke-width="1.8"/></g>
<g transform="translate(1182,319.5)"><circle r="7.2" fill="#6c6c6c"/><rect x="-1.8" y="-4.2" width="5.5" height="4.5" fill="none" stroke="#eee" stroke-width="1.2"/><rect x="-4.2" y="-1.5" width="5.5" height="4.5" fill="#6c6c6c" stroke="#eee" stroke-width="1.2"/></g>
<rect x="1155" y="331" width="300" height="27" fill="#b2b2b2"/>
<g fill="url(#gpb)">
<rect x="1156.5" y="332.5" width="58" height="23.5"/><rect x="1216" y="332.5" width="58" height="23.5"/><rect x="1276" y="332.5" width="58" height="23.5"/><rect x="1336" y="332.5" width="58" height="23.5"/><rect x="1396" y="332.5" width="57.5" height="23.5"/>
</g>
<use href="#eye" x="1177" y="338.2" style="color:#000"/>
<use href="#eye" x="1237.5" y="338.2" style="color:#a4a4a4"/>
<path d="M1298.8 344 H1311.3 M1305 337.8 V350.2" stroke="#7a0000" stroke-width="4"/>
<path d="M1298.8 344 H1311.3 M1305 337.8 V350.2" stroke="#f00" stroke-width="2.6"/>
<path d="M1359 344 H1371" stroke="#7a0000" stroke-width="3.6"/>
<path d="M1359 344 H1371" stroke="#f00" stroke-width="2.4"/>
<use href="#pencil" x="1418" y="336.5"/>
<rect x="1155" y="358" width="300" height="440" fill="#fff"/>
<rect x="1155" y="358" width="1.2" height="440" fill="#c4c4c4"/>
<rect x="1453.6" y="157" width="1.2" height="641" fill="#c8c8c8"/>
<rect x="1156" y="397.5" width="297.5" height="20.5" fill="#0a4fd6"/>
<g stroke="#111" stroke-width="1">
<rect x="1161.5" y="364.5" width="15.5" height="8" fill="#fff"/>
<rect x="1161.5" y="384.5" width="15.5" height="8" fill="#c4c4c4"/>
<rect x="1161.5" y="404.5" width="15.5" height="8" fill="#c8b88a"/>
<rect x="1161.5" y="424.5" width="15.5" height="8" fill="#5a9a2c"/>
</g>
<g font-family="Liberation Sans" font-size="13.2" fill="#111">
<text x="1182.8" y="372.8">0</text>
<text x="1182.8" y="392.8">Faciliteiten</text>
<text x="1182.8" y="412.8" fill="#fff">Paden</text>
<text x="1182.8" y="432.8">Planten</text>
</g>
<use href="#eye" x="1415" y="362.2" style="color:#000"/>
<use href="#eye" x="1415" y="382.2" style="color:#000"/>
<use href="#eye" x="1415" y="402.2" style="color:#243c6e;--ei:#1a50c8"/>
<use href="#eye" x="1415" y="422.2" style="color:#000"/>
<use href="#lock" x="1439" y="361.5" style="color:#c6c6c6"/>
<use href="#lock" x="1439" y="381.5" style="color:#c6c6c6"/>
<use href="#lock" x="1439" y="401.5" style="color:#aab8d8"/>
<use href="#lock" x="1439" y="421.5" style="color:#c6c6c6"/>
<use href="#pencil" x="1394.5" y="401.5" opacity="0.75"/>
</svg>
<div class="a" style="left:1155px;top:113px;width:334px;text-align:center;font-size:12px;color:#333">Blokkenlijst</div>
<div class="a" style="left:1155px;top:314.5px;width:334px;text-align:center;font-size:12px;color:#333">Lagenlijst</div>


<svg class="a" style="left:1140px;top:198px" width="95" height="95" viewBox="1140 198 95 95">
<defs>
<filter id="fb" x="-20%" y="-20%" width="140%" height="140%"><feGaussianBlur stdDeviation="0.9"/></filter>
<radialGradient id="ghalo"><stop offset="0.8" stop-color="#fff" stop-opacity="0"/><stop offset="0.93" stop-color="#fff" stop-opacity="0.6"/><stop offset="1" stop-color="#fff" stop-opacity="0"/></radialGradient>
</defs>
<circle cx="1186.6" cy="245" r="35" fill="url(#ghalo)"/>
<circle cx="1186.6" cy="245" r="36.5" fill="none" stroke="#a4b6c8" stroke-width="4.5" opacity="0.7" filter="url(#fb)"/>
<use href="#eye" x="1161.5" y="241.2" style="color:#34465c"/>
<path d="M1184.5 253.5 L1185.5 250 L1195 240.5 L1197.5 243 L1188 252.5 Z" fill="#d8b070" opacity="0.9"/>
<path d="M1195 240.5 L1197.5 243 L1199 241.5 L1196.5 239 Z" fill="#e06080"/>
<path d="M1187.1 245 L1187.1 266 L1191.8 261.6 L1195.5 270.6 L1199.6 268.8 L1195.8 260 L1202.2 259.6 Z" fill="#fff" stroke="#111" stroke-width="1.1" stroke-linejoin="round"/>
</svg>
<svg class="a" style="left:94px;top:110px" width="17" height="17" viewBox="94 110 17 17">
<defs><radialGradient id="gmdi" cx="0.4" cy="0.4" r="0.6"><stop offset="0" stop-color="#f4f6fa"/><stop offset="1" stop-color="#b8c4d8"/></radialGradient></defs>
<circle cx="102.4" cy="118.4" r="5.6" fill="url(#gmdi)" stroke="#1e3a8a" stroke-width="1.8"/>
<path d="M100 116.5 L104.5 121" stroke="#888" stroke-width="0.6"/>
<path d="M102 118 L107 123.5" stroke="#f0a020" stroke-width="2.2"/>
<path d="M106 122.5 L107.5 124" stroke="#e04040" stroke-width="1.5"/>
</svg>

<!-- right toolbar -->
<div class="a" style="left:1455px;top:108px;width:45px;height:690px;background:linear-gradient(90deg,#ececec,#e0e0e0 55%,#c2c2c2)"></div>
<svg class="a" style="left:1455px;top:108px" width="45" height="400" viewBox="1455 108 45 400">
<symbol id="win" overflow="visible"><rect x="0.5" y="0.5" width="27" height="27" fill="#fff" stroke="#111" stroke-width="1"/><rect x="0.5" y="0.5" width="27" height="4" fill="#000"/><rect x="1.5" y="1.3" width="3" height="2.6" fill="#fff"/></symbol>
<g fill="#a8a8a8"><rect x="1462" y="116" width="2" height="2"/><rect x="1468" y="116" width="2" height="2"/><rect x="1474" y="116" width="2" height="2"/><rect x="1480" y="116" width="2" height="2"/><rect x="1486" y="116" width="2" height="2"/></g>
<rect x="1456.5" y="120.3" width="43" height="42" rx="6" fill="#b6b6b6"/>
<rect x="1456.5" y="167.2" width="43" height="42" rx="6" fill="#b6b6b6"/>
<rect x="1456.5" y="418" width="43" height="43" rx="6" fill="#b6b6b6"/>
<use href="#win" x="1463" y="127"/>
<use href="#win" x="1463" y="174"/>
<use href="#win" x="1463" y="221"/>
<use href="#win" x="1463" y="278"/>
<use href="#win" x="1463" y="323"/>
<use href="#win" x="1463" y="369"/>
<use href="#win" x="1463" y="425"/>
<use href="#win" x="1463" y="472"/>
<!-- icon1 layers -->
<path d="M1470.5 142.5 L1475 139 L1475 150 L1470.5 153 Z" fill="#999" stroke="#444" stroke-width="0.6"/>
<path d="M1472.5 142 L1477 138.5 L1477 149.5 L1472.5 152.5 Z" fill="#ccc" stroke="#444" stroke-width="0.6"/>
<path d="M1475 141 L1484 135.5 L1484 147 L1475 152 Z" fill="#fff" stroke="#444" stroke-width="0.7"/>
<path d="M1477 149 L1480.5 140 L1482 146 Z" fill="none" stroke="#e03030" stroke-width="0.8"/>
<!-- icon2 -->
<rect x="1470.5" y="183.5" width="11" height="8.5" fill="#f5e9b0" stroke="#555" stroke-width="0.8"/>
<circle cx="1479" cy="191" r="5" fill="#f0e4a8" fill-opacity="0.85" stroke="#555" stroke-width="0.8"/>
<!-- icon3 -->
<rect x="1469" y="231" width="16" height="11" rx="2" fill="#f6f6f6" stroke="#c4d4ec" stroke-width="0.8"/>
<!-- list -->
<g fill="#000"><rect x="1466.5" y="285" width="3" height="3"/><rect x="1466.5" y="290" width="3" height="3"/><rect x="1466.5" y="295" width="3" height="3"/></g>
<g fill="#fff" stroke="#555" stroke-width="0.7"><rect x="1471.5" y="285" width="15" height="3"/><rect x="1471.5" y="290" width="15" height="3"/><rect x="1471.5" y="295" width="15" height="3"/></g>
<!-- filter -->
<path d="M1471 333.5 H1485 L1479.5 340 V347 L1477 345 V340 Z" fill="#ddd" stroke="#444" stroke-width="0.8"/>
<!-- projector -->
<path d="M1469.5 379 L1474.5 382 L1474.5 388 L1469.5 391 Z" fill="#fff" stroke="#333" stroke-width="0.8"/>
<rect x="1474.5" y="381.5" width="9" height="7" fill="#aaa"/>
<line x1="1467" y1="385" x2="1489" y2="385" stroke="#e88" stroke-width="0.6" stroke-dasharray="1 1"/>
<!-- separators -->
<line x1="1457" y1="262.5" x2="1499" y2="262.5" stroke="#666" stroke-width="1" stroke-dasharray="1 2"/>
<line x1="1457" y1="410.5" x2="1499" y2="410.5" stroke="#666" stroke-width="1" stroke-dasharray="1 2"/>
<!-- command -->
<g stroke="#999" stroke-width="0.5"><line x1="1466" y1="434" x2="1478" y2="434"/><line x1="1466" y1="438" x2="1477" y2="438"/><line x1="1466" y1="442" x2="1479" y2="442"/><line x1="1466" y1="446" x2="1479" y2="446"/></g>
<line x1="1464" y1="449" x2="1490" y2="449" stroke="#333" stroke-width="0.6"/>
<line x1="1468" y1="451" x2="1487" y2="451" stroke="#555" stroke-width="0.8"/>
<!-- clipboard -->
<rect x="1470" y="480" width="14" height="15" rx="1" fill="#c8842c" stroke="#8a5a1a" stroke-width="0.6"/>
<rect x="1472" y="482" width="10" height="11.5" fill="#f8f8f8"/>
<rect x="1474" y="478.5" width="6" height="3" fill="#999"/>
<g stroke="#c8c8c8" stroke-width="0.6"><line x1="1474" y1="485" x2="1480" y2="485"/><line x1="1474" y1="487.5" x2="1480" y2="487.5"/><line x1="1474" y1="490" x2="1479" y2="490"/></g>
</svg>


<!-- status bar -->
<div class="a" style="left:0;top:798px;width:1500px;height:46px;background:#dcdcdc"></div>
<div class="st" style="left:2px;top:807.3px">47.0937,12.7851</div>
<div class="st" style="left:2px;top:827px">@47.0937,12.7851</div>
<div class="a" style="left:253px;top:802px;width:1px;height:40px;background:#777"></div>
<div class="st" style="left:256px;top:807.3px">48.7984&lt;15°</div>
<div class="st" style="left:256px;top:827px">@48.7984&lt;15°</div>
<div class="a" style="left:506px;top:819px;width:6px;height:6px;border-radius:3px;background:#c6c6c6"></div>
<div class="st" style="left:572px;top:817px;letter-spacing:0.45px">Object of gebied selecteren</div>
<svg class="a" style="left:714px;top:803px" width="24" height="36" viewBox="714 803 24 36"><path d="M717.5 815 C717.5 809 721 806 726 806 C731 806 734.5 809 734.5 815 L734.5 827 C734.5 833 731 835.8 726 835.8 C721 835.8 717.5 833 717.5 827 Z" fill="#fff" stroke="#333" stroke-width="0.9"/><path d="M717.5 818.5 C721 817.6 731 817.6 734.5 818.5" fill="none" stroke="#333" stroke-width="0.9"/><line x1="726" y1="806" x2="726" y2="818" stroke="#333" stroke-width="0.6"/><rect x="724.3" y="809" width="3.4" height="6.5" rx="1.7" fill="#fff" stroke="#333" stroke-width="0.8"/></svg>
<div class="a" style="left:940px;top:819px;width:6px;height:6px;border-radius:3px;background:#c6c6c6"></div>
<div class="st" style="left:949px;top:817px;letter-spacing:0.35px">Geen objecten geselecteerd.</div>
<div class="a" style="left:1269px;top:819px;width:6px;height:6px;border-radius:3px;background:#c6c6c6"></div>

</div></body></html>
